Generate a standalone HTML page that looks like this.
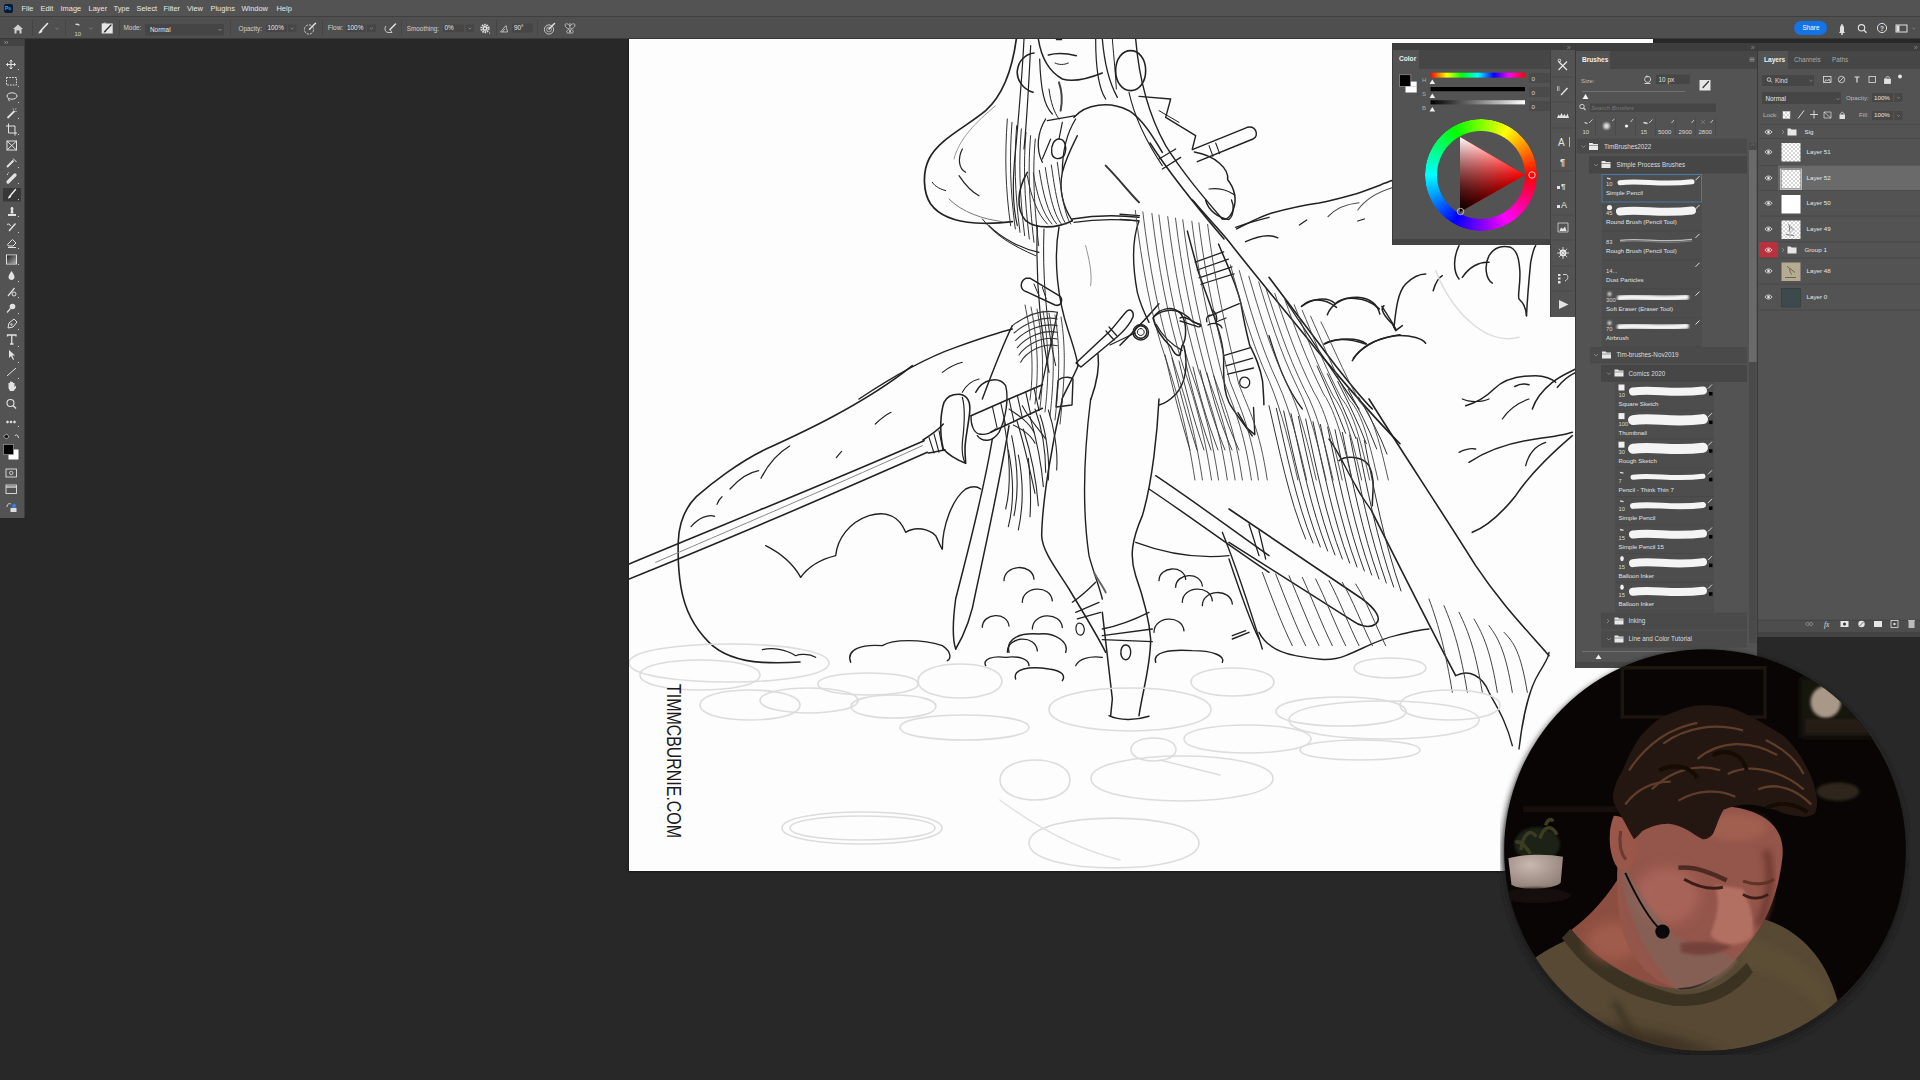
<!DOCTYPE html>
<html><head><meta charset="utf-8">
<style>
*{box-sizing:border-box;margin:0;padding:0}
html,body{width:1920px;height:1080px;overflow:hidden;background:#282828;font-family:"Liberation Sans",sans-serif;color:#d6d6d6}
.a{position:absolute}
#menubar{left:0;top:0;width:1920px;height:17px;background:#535353;border-bottom:1px solid #3f3f3f}
#menubar span{position:absolute;top:3.6px;font-size:7.45px;color:#e6e6e6;line-height:10px}
#opts{left:0;top:17px;width:1920px;height:22px;background:#4f4f4f;border-bottom:1px solid #393939}
#opts .t{position:absolute;font-size:6.4px;color:#cfcfcf;line-height:8px}
#opts .sep{position:absolute;top:3px;width:1px;height:16px;background:#454545}
#toolbar{left:0;top:39px;width:25px;height:479px;background:#535353;border-right:1px solid #3c3c3c}
#canvas{left:629px;top:39px;width:1024px;height:832px;background:#fdfdfd;overflow:hidden;box-shadow:0 1px 2px #151515}
.panel{background:#535353}
.strip{background:#3e3e3e}
.tabbar{background:#464646}
.tab{position:absolute;background:#535353;font-size:6.6px;font-weight:bold;color:#f0f0f0;line-height:18px;padding-left:6px}
.lbl{position:absolute;font-size:6px;color:#d8d8d8;line-height:8px;white-space:nowrap}
</style></head>
<body>
<!-- MENU BAR -->
<div id="menubar" class="a">
  <div class="a" style="left:4px;top:4px;width:9px;height:9px;background:#0a1a33;border-radius:2px;"><div style="position:absolute;left:1px;top:1px;font-size:5px;font-weight:bold;color:#31a8ff;line-height:7px">Ps</div></div>
  <span style="left:21.5px">File</span>
  <span style="left:40.5px">Edit</span>
  <span style="left:60.5px">Image</span>
  <span style="left:88.5px">Layer</span>
  <span style="left:113.5px">Type</span>
  <span style="left:136.5px">Select</span>
  <span style="left:163.5px">Filter</span>
  <span style="left:187px">View</span>
  <span style="left:210.5px">Plugins</span>
  <span style="left:241.5px">Window</span>
  <span style="left:276.5px">Help</span>
</div>
<!-- OPTIONS BAR -->
<div id="opts" class="a">
  <svg class="a" style="left:0;top:0" width="600" height="22" viewBox="0 17 600 22">
    <!-- home -->
    <path d="M13 29 L18 24.5 L23 29 L21.5 29 L21.5 33.5 L19.5 33.5 L19.5 30.5 L16.5 30.5 L16.5 33.5 L14.5 33.5 L14.5 29 Z" fill="#cfcfcf"/>
    <!-- brush -->
    <path d="M47.5 23.5 L41 30.5" stroke="#e8e8e8" stroke-width="1.6" stroke-linecap="round"/>
    <path d="M41.5 30 C39.5 30.5 38.5 32 38.5 33.5 C40.5 33.5 42 32.5 42.5 31 Z" fill="#e8e8e8"/>
    <path d="M55.5 28 L57 29.2 L58.5 28" stroke="#8a8a8a" stroke-width="0.8" fill="none"/>
    <path d="M75.5 24.5 C76.5 24 78 24.3 79.5 25.2" stroke="#d8d8d8" stroke-width="1.3" fill="none"/>
    <path d="M89.5 28 L91 29.2 L92.5 28" stroke="#8a8a8a" stroke-width="0.8" fill="none"/>
    <rect x="101.7" y="23.5" width="11" height="10" fill="#e6e6e6"/>
    <path d="M101.7 23.5 L105 22.4 L107 23.5 Z" fill="#e6e6e6"/>
    <path d="M111 25 L105.5 30.8" stroke="#333" stroke-width="1.3" stroke-linecap="round"/>
    <path d="M105.8 30.3 C104.5 30.6 103.8 31.5 103.6 32.5 C104.8 32.5 105.8 31.9 106.3 30.9Z" fill="#333"/>
    <!-- option boxes -->
    <rect x="145" y="24" width="79" height="11.5" fill="#454545"/>
    <path d="M218.5 29 L220 30.5 L221.5 29" stroke="#9a9a9a" stroke-width="0.8" fill="none"/>
    <rect x="266" y="24.5" width="21" height="7.5" fill="#464646"/>
    <rect x="288" y="24.5" width="8.5" height="7.5" fill="#464646"/>
    <path d="M290.8 27.8 L292.2 29 L293.6 27.8" stroke="#9a9a9a" stroke-width="0.7" fill="none"/>
    <circle cx="309" cy="29.5" r="4.6" fill="none" stroke="#cfcfcf" stroke-width="0.9" stroke-dasharray="2.5 1"/>
    <path d="M315.5 23.2 L309.5 29.3" stroke="#e0e0e0" stroke-width="1.5" stroke-linecap="round"/>
    <rect x="346" y="24.5" width="19.5" height="7.5" fill="#464646"/>
    <rect x="367" y="24.5" width="9" height="7.5" fill="#464646"/>
    <path d="M370 27.8 L371.4 29 L372.8 27.8" stroke="#9a9a9a" stroke-width="0.7" fill="none"/>
    <path d="M386 26 C384 28.5 385 32 388 32.5 L392 32.5 L390 29.5" stroke="#cfcfcf" stroke-width="0.9" fill="none"/>
    <path d="M395.5 24 L390 29.5" stroke="#e0e0e0" stroke-width="1.5" stroke-linecap="round"/>
    <rect x="443" y="24.5" width="21" height="7.5" fill="#464646"/>
    <rect x="466" y="24.5" width="8" height="7.5" fill="#464646"/>
    <path d="M468.6 27.8 L470 29 L471.4 27.8" stroke="#9a9a9a" stroke-width="0.7" fill="none"/>
    <!-- gear -->
    <circle cx="485" cy="28.5" r="3.6" fill="none" stroke="#e0e0e0" stroke-width="2.2" stroke-dasharray="1.4 0.85"/>
    <circle cx="485" cy="28.5" r="2.4" fill="#e0e0e0"/>
    <circle cx="485" cy="28.5" r="1" fill="#4f4f4f"/>
    <rect x="489" y="32.5" width="1" height="1" fill="#ddd"/>
    <path d="M500.5 32 L507.5 32 L506 25.5 Z M503 32 C503 30.5 504 29.5 505.2 29.3" stroke="#cfcfcf" stroke-width="0.8" fill="none"/>
    <rect x="512" y="23.5" width="21" height="9" fill="#464646"/>
    <circle cx="549" cy="29.5" r="4.6" fill="none" stroke="#cfcfcf" stroke-width="0.9"/>
    <circle cx="549" cy="29.5" r="2.4" fill="none" stroke="#cfcfcf" stroke-width="0.7"/>
    <path d="M554.5 23.5 L549 29" stroke="#e0e0e0" stroke-width="1.5" stroke-linecap="round"/>
    <path d="M570 26 C568 23 565 23.5 565 25 C565 27 567 28.5 569 29 C567 30 566 32 567.5 33 C569 33.5 570 31.5 570 30 C570 31.5 571 33.5 572.5 33 C574 32 573 30 571 29 C573 28.5 575 27 575 25 C575 23.5 572 23 570 26 Z M570 23 L570 34" stroke="#cfcfcf" stroke-width="0.8" fill="none"/>
  </svg>
  <div class="sep" style="left:32px"></div>
  <div class="sep" style="left:65px"></div>
  <div class="sep" style="left:119px"></div>
  <div class="sep" style="left:229.5px"></div>
  <div class="sep" style="left:322px"></div>
  <div class="sep" style="left:401px"></div>
  <div class="sep" style="left:496px"></div>
  <div class="sep" style="left:537px"></div>
  <span class="t" style="left:74.5px;top:13px;font-size:6px">10</span>
  <span class="t" style="left:123.5px;top:7px">Mode:</span>
  <span class="t" style="left:150px;top:9px;color:#e8e8e8">Normal</span>
  <span class="t" style="left:238.5px;top:8px">Opacity:</span>
  <span class="t" style="left:267.5px;top:7px;color:#e8e8e8">100%</span>
  <span class="t" style="left:327.8px;top:7px">Flow:</span>
  <span class="t" style="left:347px;top:7px;color:#e8e8e8">100%</span>
  <span class="t" style="left:406.7px;top:8px">Smoothing:</span>
  <span class="t" style="left:444.5px;top:7px;color:#e8e8e8">0%</span>
  <span class="t" style="left:514px;top:7px;color:#e8e8e8">90°</span>
  <!-- right side -->
  <div class="a" style="left:1794px;top:4px;width:33px;height:14px;border-radius:7px;background:#1473e6"></div>
  <span class="t" style="left:1802.5px;top:7px;color:#fff;font-size:6.4px">Share</span>
  <svg class="a" style="left:1830px;top:0" width="90" height="22" viewBox="1830 17 90 22">
    <path d="M1839 33 L1845 33 L1844 31.5 L1844 28 C1844 26 1843 25 1842 25 C1841 25 1840 26 1840 28 L1840 31.5 Z" fill="#e0e0e0"/>
    <circle cx="1842" cy="34" r="1" fill="#e0e0e0"/>
    <circle cx="1842" cy="24.8" r="0.8" fill="#e0e0e0"/>
    <circle cx="1861.5" cy="27.8" r="3.2" fill="none" stroke="#e0e0e0" stroke-width="1.1"/>
    <path d="M1864 30.3 L1866.5 32.8" stroke="#e0e0e0" stroke-width="1.3"/>
    <circle cx="1882" cy="28" r="4.6" fill="none" stroke="#e0e0e0" stroke-width="1"/>
    <text x="1880" y="30.5" font-size="6.5" fill="#e0e0e0" font-family="Liberation Sans" font-weight="bold">?</text>
    <rect x="1896" y="25" width="11" height="7" fill="none" stroke="#e0e0e0" stroke-width="1"/>
    <rect x="1896.5" y="25.5" width="3" height="6" fill="#e0e0e0"/>
    <path d="M1912.5 28 L1913.8 29.2 L1915.1 28" stroke="#9a9a9a" stroke-width="0.7" fill="none"/>
  </svg>
</div>
<!-- TOOLBAR -->
<div id="toolbar" class="a">
  <div class="a" style="left:0;top:0;width:24px;height:7px;background:#434343"></div>
  <svg class="a" style="left:0;top:0" width="25" height="479" viewBox="0 39 25 479">
    <g fill="none" stroke="#e2e2e2" stroke-width="1">
      <path d="M4.5 41.5 L6 42.5 L4.5 43.5 M6.5 41.5 L8 42.5 L6.5 43.5" stroke="#bbb" stroke-width="0.6"/>
      <!-- move -->
      <path d="M11 60 L11 69 M6.5 64.5 L15.5 64.5" stroke-width="1.1"/>
      <path d="M9.5 61.5 L11 60 L12.5 61.5 M9.5 67.5 L11 69 L12.5 67.5 M8 63 L6.5 64.5 L8 66 M14 63 L15.5 64.5 L14 66" stroke-width="1"/>
      <!-- marquee -->
      <rect x="6.5" y="77.5" width="10" height="7.5" stroke-dasharray="1.6 1.2"/>
      <!-- lasso -->
      <ellipse cx="12" cy="96" rx="5" ry="3.2"/>
      <path d="M8.5 98.5 C8 100 9 101 10 100.5"/>
      <!-- magic wand -->
      <path d="M7.5 118 L14.5 111" stroke-width="1.8"/>
      <path d="M13 108.5 L13.5 109.5 M16 108.5 L15.5 109.5 M16.5 111.5 L15.5 111.5"/>
      <!-- crop -->
      <path d="M8.5 123.5 L8.5 133 L17 133 M6 126 L15 126 L15 135.5"/>
      <!-- frame -->
      <rect x="7" y="141" width="9.5" height="9"/><path d="M7 141 L16.5 150 M16.5 141 L7 150"/>
      <!-- eyedropper -->
      <path d="M7 167 L13.5 160.5" stroke-width="2"/><path d="M13 158.5 L16.5 162"/>
      <!-- healing -->
      <path d="M8 182 L15 175" stroke-width="3.2" stroke-linecap="round"/>
      <path d="M7.5 175 C7 173.5 8 172.5 9.5 172.5" stroke-dasharray="1 1"/>
      <!-- stamp -->
      <path d="M8 214 L16 214 L16 216 L8 216 Z M10.5 213.5 L13.5 213.5 L13 210 C14 209 13.5 207 12 207 C10.5 207 10 209 11 210Z" fill="#e2e2e2" stroke="none"/>
      <!-- history brush -->
      <path d="M9 231 L15.5 223.5" stroke-width="1.4"/><path d="M7 224.5 C8.5 223.5 10 224 10.5 226"/>
      <!-- eraser -->
      <path d="M7.5 244.5 L12.5 239.5 L16 243 L13 246 L8.5 246 Z" />
      <path d="M8 247.5 L16 247.5"/>
      <!-- gradient -->
      <rect x="6.5" y="255" width="10" height="9"/>
      <!-- blur -->
      <path d="M11.5 271 C9 274.5 8.5 276 8.5 277 C8.5 279 10 280 11.5 280 C13 280 14.5 279 14.5 277 C14.5 276 14 274.5 11.5 271Z" fill="#e2e2e2" stroke="none"/>
      <!-- smudge -->
      <path d="M8 296 L14.5 288" stroke-width="1.2"/><circle cx="14" cy="294" r="2"/>
      <!-- dodge -->
      <circle cx="12.5" cy="290" r="0" /><circle cx="13" cy="309.5" r="0"/>
      <circle cx="12.5" cy="306.5" r="2.8" fill="#e2e2e2" stroke="none"/><path d="M10.5 308.5 L7 312.5" stroke-width="1.2"/>
      <!-- pen -->
      <path d="M8 328 L9 323 L14 319 L17 322 L13 327 Z"/><circle cx="11.5" cy="324.5" r="0.8"/>
      <!-- type -->
      <path d="M7.5 336.5 L7.5 335 L16 335 L16 336.5 M11.75 335 L11.75 344 M10 344 L13.5 344" stroke-width="1.3"/>
      <!-- path select -->
      <path d="M9 350 L9 358 L11 356 L13 360 L14 359.5 L12.3 355.5 L15 355.5 Z" fill="#e2e2e2" stroke="none"/>
      <!-- line -->
      <path d="M7 376 L16 368"/>
      <!-- hand -->
      <path d="M8.5 388 L8.5 383 L10 383 L10 381.5 L11.5 381.5 L11.5 382 L13 382 L13 383 L14.5 383 L14.5 387 L16 385.5 L16 388 L13.5 391 L10 391 Z" fill="#e2e2e2" stroke="none"/>
      <!-- zoom -->
      <circle cx="10.5" cy="403" r="3.5" stroke-width="1.1"/><path d="M13 405.5 L16 408.5" stroke-width="1.4"/>
      <!-- more -->
      <circle cx="7.5" cy="422" r="0.9" fill="#e2e2e2"/><circle cx="11" cy="422" r="0.9" fill="#e2e2e2"/><circle cx="14.5" cy="422" r="0.9" fill="#e2e2e2"/>
      <!-- swap -->
      <path d="M15 436 C15.5 434.5 17 434.5 18 436 L18.5 438" stroke-width="0.9"/>
      <!-- quick mask -->
      <rect x="6" y="469" width="10.5" height="8" stroke-width="0.9"/><circle cx="11.25" cy="473" r="1.7" stroke-width="0.8"/>
      <!-- screen mode -->
      <rect x="6" y="485" width="10.5" height="8.5" stroke-width="0.9"/><path d="M6 487 L16.5 487" stroke-width="1.3"/>
      <path d="M7 507 C7 504 9 503 11 504" stroke-width="0.9"/>
    </g>
    <!-- small corner dots -->
    <g fill="#cfcfcf">
      <rect x="18" y="69" width="1" height="1"/><rect x="18" y="86" width="1" height="1"/><rect x="18" y="102" width="1" height="1"/>
      <rect x="18" y="118" width="1" height="1"/><rect x="18" y="134" width="1" height="1"/><rect x="18" y="167" width="1" height="1"/>
      <rect x="18" y="183" width="1" height="1"/><rect x="18" y="199" width="1" height="1"/><rect x="18" y="216" width="1" height="1"/>
      <rect x="18" y="232" width="1" height="1"/><rect x="18" y="248" width="1" height="1"/><rect x="18" y="264" width="1" height="1"/>
      <rect x="18" y="281" width="1" height="1"/><rect x="18" y="297" width="1" height="1"/><rect x="18" y="313" width="1" height="1"/>
      <rect x="18" y="329" width="1" height="1"/><rect x="18" y="346" width="1" height="1"/><rect x="18" y="362" width="1" height="1"/>
      <rect x="18" y="378" width="1" height="1"/><rect x="18" y="426" width="1" height="1"/>
    </g>
    <!-- selected brush -->
    <rect x="3" y="188" width="18" height="13.5" fill="#383838"/>
    <path d="M15.5 189.5 L10 196" stroke="#f0f0f0" stroke-width="1.4" stroke-linecap="round"/>
    <path d="M10.3 195.5 C9 195.8 8 197 8 198.5 C9.5 198.5 10.8 197.6 11.2 196.3Z" fill="#f0f0f0"/>
    <rect x="18" y="199" width="1" height="1" fill="#cfcfcf"/>
    <!-- gradient fill -->
    <defs><linearGradient id="gg" x1="0" y1="0" x2="1" y2="1"><stop offset="0" stop-color="#222"/><stop offset="1" stop-color="#aaa"/></linearGradient></defs>
    <rect x="7" y="255.5" width="9" height="8" fill="url(#gg)"/>
    <!-- fg/bg -->
    <path d="M3.5 436 L7 434 L9 437 L6 439 Z" fill="#111" stroke="#ddd" stroke-width="0.6"/>
    <rect x="8.5" y="449.5" width="10" height="10" fill="#fff"/>
    <rect x="3.5" y="444.5" width="10" height="10" fill="#000" stroke="#9a9a9a" stroke-width="0.7"/>
    <circle cx="14" cy="506" r="2.2" fill="#3b7dd8"/>
    <rect x="10.5" y="508" width="6" height="4" fill="#ddd"/>
  </svg>
</div>
<!-- CANVAS -->
<div id="canvas" class="a"><svg id="art" width="1024" height="832" viewBox="0 0 1024 832" style="position:absolute;left:0;top:0"><g fill="none" stroke-linecap="round" stroke-linejoin="round"><g transform="translate(0 0) scale(0.333333)">
<path d="M1162 0 C1150 90 1120 170 1070 215 C1010 265 930 300 900 360 C880 400 882 460 905 495 C930 530 980 548 1040 552 C1080 555 1120 552 1150 548" stroke="#222" stroke-width="1.7" vector-effect="non-scaling-stroke"/>
<path d="M1100 200 C1040 250 990 300 975 360" stroke="#999" stroke-width="1.0" vector-effect="non-scaling-stroke"/>
<path d="M1000 330 C985 360 990 390 1010 400" stroke="#222" stroke-width="1.2" vector-effect="non-scaling-stroke"/>
<path d="M990 410 C1010 440 1030 460 1050 470" stroke="#222" stroke-width="1.2" vector-effect="non-scaling-stroke"/>
<path d="M910 430 C920 445 935 450 950 455" stroke="#222" stroke-width="1.0" vector-effect="non-scaling-stroke"/>
<path d="M960 480 C1000 520 1060 540 1120 548" stroke="#777" stroke-width="1.0" vector-effect="non-scaling-stroke"/>
<path d="M1080 560 C1120 600 1180 630 1230 640" stroke="#222" stroke-width="1.2" vector-effect="non-scaling-stroke"/>
<path d="M1060 540 C1100 590 1150 620 1220 650" stroke="#222" stroke-width="1.0" vector-effect="non-scaling-stroke"/>
<path d="M1135 240 C1127 350 1129 450 1145 560" stroke="#333" stroke-width="1.0" vector-effect="non-scaling-stroke"/>
<path d="M1149 250 C1141 355 1143 455 1159 570" stroke="#333" stroke-width="1.0" vector-effect="non-scaling-stroke"/>
<path d="M1163 260 C1155 360 1157 460 1173 580" stroke="#333" stroke-width="1.0" vector-effect="non-scaling-stroke"/>
<path d="M1177 270 C1169 365 1171 465 1187 590" stroke="#333" stroke-width="1.0" vector-effect="non-scaling-stroke"/>
<path d="M1191 280 C1183 370 1185 470 1201 600" stroke="#333" stroke-width="1.0" vector-effect="non-scaling-stroke"/>
<path d="M1205 290 C1197 375 1199 475 1215 610" stroke="#333" stroke-width="1.0" vector-effect="non-scaling-stroke"/>
<path d="M1219 300 C1211 380 1213 480 1229 620" stroke="#333" stroke-width="1.0" vector-effect="non-scaling-stroke"/>
<path d="M1185 0 C1180 100 1170 220 1160 330 C1150 420 1150 500 1165 560" stroke="#222" stroke-width="1.2" vector-effect="non-scaling-stroke"/>
<path d="M1205 20 C1200 120 1195 230 1185 330" stroke="#222" stroke-width="1.2" vector-effect="non-scaling-stroke"/>
<path d="M1232 60 C1235 150 1245 200 1270 225" stroke="#222" stroke-width="1.2" vector-effect="non-scaling-stroke"/>
<path d="M1260 150 C1265 190 1275 220 1290 240" stroke="#222" stroke-width="1.0" vector-effect="non-scaling-stroke"/>
<path d="M1290 130 C1300 160 1300 190 1295 215" stroke="#444" stroke-width="2.0" vector-effect="non-scaling-stroke"/>
<path d="M1228 0 C1235 45 1255 95 1300 120 C1330 130 1370 122 1420 102" stroke="#222" stroke-width="1.5" vector-effect="non-scaling-stroke"/>
<path d="M1258 48 C1280 42 1310 42 1342 50" stroke="#222" stroke-width="1.5" vector-effect="non-scaling-stroke"/>
<path d="M1278 72 C1290 78 1305 78 1318 72" stroke="#222" stroke-width="1.0" vector-effect="non-scaling-stroke"/>
<path d="M1282 2 L1298 2" stroke="#222" stroke-width="1.2" vector-effect="non-scaling-stroke"/>
<path d="M1212 160 C1180 150 1162 120 1165 95 C1168 65 1190 45 1215 42" stroke="#222" stroke-width="1.6" vector-effect="non-scaling-stroke"/>
<path d="M1505 35 C1530 35 1550 60 1550 95 C1550 130 1530 155 1505 155 C1480 155 1460 130 1460 95 C1460 60 1480 35 1505 35 Z" stroke="#222" stroke-width="1.6" vector-effect="non-scaling-stroke"/>
<path d="M1420 0 C1425 60 1440 130 1465 175" stroke="#222" stroke-width="1.3" vector-effect="non-scaling-stroke"/>
<path d="M1400 0 C1400 80 1410 150 1430 180" stroke="#222" stroke-width="1.2" vector-effect="non-scaling-stroke"/>
<path d="M1450 0 C1455 60 1460 110 1462 150" stroke="#222" stroke-width="1.0" vector-effect="non-scaling-stroke"/>
<path d="M1520 0 C1530 120 1560 230 1610 320 C1660 400 1720 470 1780 540" stroke="#222" stroke-width="1.4" vector-effect="non-scaling-stroke"/>
<path d="M1500 160 C1520 250 1560 320 1600 380" stroke="#222" stroke-width="1.1" vector-effect="non-scaling-stroke"/>
<path d="M1530 172 L1625 180 L1610 235 L1700 290 L1690 330" stroke="#222" stroke-width="1.4" vector-effect="non-scaling-stroke"/>
<path d="M1590 215 L1650 250" stroke="#222" stroke-width="1.0" vector-effect="non-scaling-stroke"/>
<path d="M1335 235 C1370 195 1440 185 1500 215 C1540 240 1570 290 1600 340" stroke="#222" stroke-width="1.6" vector-effect="non-scaling-stroke"/>
<path d="M1340 240 C1315 280 1300 340 1300 400" stroke="#222" stroke-width="1.3" vector-effect="non-scaling-stroke"/>
<path d="M1430 380 C1470 420 1500 460 1530 490" stroke="#333" stroke-width="2.0" vector-effect="non-scaling-stroke"/>
<path d="M1250 240 C1225 280 1220 330 1240 370" stroke="#222" stroke-width="1.3" vector-effect="non-scaling-stroke"/>
<path d="M1195 400 C1165 450 1160 510 1190 545 C1220 570 1280 570 1330 545" stroke="#222" stroke-width="1.6" vector-effect="non-scaling-stroke"/>
<path d="M1330 545 C1300 500 1290 450 1300 400 C1310 360 1330 320 1345 290" stroke="#222" stroke-width="1.4" vector-effect="non-scaling-stroke"/>
<path d="M1255 245 L1340 230" stroke="#222" stroke-width="1.2" vector-effect="non-scaling-stroke"/>
<path d="M1290 300 C1310 300 1315 330 1305 350 C1290 365 1270 360 1268 340 C1266 320 1275 300 1290 300 Z" stroke="#222" stroke-width="1.4" vector-effect="non-scaling-stroke"/>
<path d="M1300 250 L1290 300" stroke="#222" stroke-width="1.2" vector-effect="non-scaling-stroke"/>
<path d="M1240 360 L1265 300" stroke="#222" stroke-width="1.2" vector-effect="non-scaling-stroke"/>
<path d="M1195 410 C1205 470 1225 525 1255 555" stroke="#333" stroke-width="1.0" vector-effect="non-scaling-stroke"/>
<path d="M1213 402 C1223 465 1241 525 1269 555" stroke="#333" stroke-width="1.0" vector-effect="non-scaling-stroke"/>
<path d="M1231 394 C1241 460 1257 525 1283 555" stroke="#333" stroke-width="1.0" vector-effect="non-scaling-stroke"/>
<path d="M1249 386 C1259 455 1273 525 1297 555" stroke="#333" stroke-width="1.0" vector-effect="non-scaling-stroke"/>
<path d="M1267 378 C1277 450 1289 525 1311 555" stroke="#333" stroke-width="1.0" vector-effect="non-scaling-stroke"/>
<path d="M1285 370 C1295 445 1305 525 1325 555" stroke="#333" stroke-width="1.0" vector-effect="non-scaling-stroke"/>
<path d="M1330 540 C1400 528 1470 528 1530 535" stroke="#222" stroke-width="1.5" vector-effect="non-scaling-stroke"/>
<path d="M1335 550 C1400 540 1470 540 1528 546" stroke="#222" stroke-width="1.2" vector-effect="non-scaling-stroke"/>
<path d="M1290 564 C1272 663 1287 783 1317 873 C1332 918 1344 957 1347 981" stroke="#222" stroke-width="1.4" vector-effect="non-scaling-stroke"/>
<path d="M1530 545 C1510 600 1510 680 1525 760 C1535 800 1550 830 1560 850" stroke="#222" stroke-width="1.4" vector-effect="non-scaling-stroke"/>
<path d="M1370 620 C1380 660 1390 700 1385 740" stroke="#888" stroke-width="0.9" vector-effect="non-scaling-stroke"/>
<path d="M1225 560 C1220 700 1230 850 1260 1000" stroke="#222" stroke-width="1.2" vector-effect="non-scaling-stroke"/>
<path d="M1245 570 C1240 700 1250 850 1280 980" stroke="#222" stroke-width="1.0" vector-effect="non-scaling-stroke"/>
<path d="M1190 718 C1172 728 1172 752 1192 758 L1278 798 C1298 804 1304 780 1290 770 L1204 718 Z" stroke="#222" stroke-width="1.5" vector-effect="non-scaling-stroke"/>
<path d="M1215 735 L1230 770 M1240 745 L1252 780" stroke="#222" stroke-width="1.0" vector-effect="non-scaling-stroke"/>
<path d="M1150 860 C1190 830 1240 810 1285 820" stroke="#333" stroke-width="1.1" vector-effect="non-scaling-stroke"/>
<path d="M1155 882 C1190 852 1240 830 1285 840" stroke="#333" stroke-width="1.1" vector-effect="non-scaling-stroke"/>
<path d="M1160 904 C1190 874 1240 850 1285 860" stroke="#333" stroke-width="1.1" vector-effect="non-scaling-stroke"/>
<path d="M1165 926 C1190 896 1240 870 1285 880" stroke="#333" stroke-width="1.1" vector-effect="non-scaling-stroke"/>
<path d="M1170 948 C1190 918 1240 890 1285 900" stroke="#333" stroke-width="1.1" vector-effect="non-scaling-stroke"/>
<path d="M1175 970 C1190 940 1240 910 1285 920" stroke="#333" stroke-width="1.1" vector-effect="non-scaling-stroke"/>
<path d="M1150 860 C1120 920 1090 1000 1060 1080" stroke="#222" stroke-width="1.4" vector-effect="non-scaling-stroke"/>
<path d="M1285 820 C1270 900 1250 980 1230 1080" stroke="#222" stroke-width="1.3" vector-effect="non-scaling-stroke"/>
<path d="M690 1080 C780 1020 880 960 980 925 C1050 900 1110 880 1150 870" stroke="#222" stroke-width="1.5" vector-effect="non-scaling-stroke"/>
<path d="M940 1000 C960 985 980 975 1000 970" stroke="#222" stroke-width="1.1" vector-effect="non-scaling-stroke"/>
<path d="M1000 1060 C1010 1040 1030 1025 1050 1020" stroke="#222" stroke-width="1.1" vector-effect="non-scaling-stroke"/>
<path d="M1690 332 L1855 265 C1880 258 1892 290 1872 300 L1705 368" stroke="#222" stroke-width="1.5" vector-effect="non-scaling-stroke"/>
<path d="M1740 320 L1752 352 M1760 312 L1772 344" stroke="#222" stroke-width="1.1" vector-effect="non-scaling-stroke"/>
<path d="M1696 339 C1760 350 1800 390 1796 422 C1815 445 1825 480 1813 511 C1805 535 1790 545 1779 539" stroke="#222" stroke-width="1.5" vector-effect="non-scaling-stroke"/>
<path d="M1740 450 C1770 445 1800 455 1818 468" stroke="#222" stroke-width="1.2" vector-effect="non-scaling-stroke"/>
<path d="M1563 312 C1620 400 1700 500 1785 600" stroke="#222" stroke-width="1.5" vector-effect="non-scaling-stroke"/>
<path d="M1590 360 L1640 330 M1600 390 L1655 355" stroke="#222" stroke-width="1.3" vector-effect="non-scaling-stroke"/>
<path d="M1820 565 C1860 550 1900 540 1920 535" stroke="#222" stroke-width="1.4" vector-effect="non-scaling-stroke"/>
</g>
<g transform="translate(0 360) scale(0.333333)">
<path d="M850 -100 C700 20 500 110 405 153 C330 190 250 250 202 293 C165 330 150 380 148 425 C146 480 150 530 156 565 C165 620 190 680 240 730 C270 760 320 785 400 790 C440 792 480 791 513 789" stroke="#222" stroke-width="1.6" vector-effect="non-scaling-stroke"/>
<path d="M400 752 C430 745 470 750 500 770 C510 765 540 763 560 775" stroke="#222" stroke-width="1.2" vector-effect="non-scaling-stroke"/>
<path d="M739 75 C755 60 770 48 786 40" stroke="#222" stroke-width="1.2" vector-effect="non-scaling-stroke"/>
<path d="M622 176 C628 168 633 162 638 157" stroke="#222" stroke-width="1.2" vector-effect="non-scaling-stroke"/>
<path d="M303 270 C330 240 360 220 389 215" stroke="#222" stroke-width="1.2" vector-effect="non-scaling-stroke"/>
<path d="M396 238 C420 190 450 160 482 141" stroke="#222" stroke-width="1.2" vector-effect="non-scaling-stroke"/>
<path d="M186 383 C210 355 240 345 257 352" stroke="#222" stroke-width="1.2" vector-effect="non-scaling-stroke"/>
<path d="M264 316 C268 305 273 298 279 293" stroke="#222" stroke-width="1.2" vector-effect="non-scaling-stroke"/>
<path d="M0 495 C300 370 600 250 885 125" stroke="#222" stroke-width="1.6" vector-effect="non-scaling-stroke"/>
<path d="M0 540 C300 420 600 290 895 160" stroke="#222" stroke-width="1.6" vector-effect="non-scaling-stroke"/>
<path d="M80 490 C380 360 650 245 880 140" stroke="#888" stroke-width="1.0" vector-effect="non-scaling-stroke"/>
<path d="M943 150 C930 100 935 40 945 10 C955 -10 975 -15 993 -14 C1015 -10 1025 10 1022 40 C1018 80 1008 120 1008 150 C1008 170 1010 185 1010 193 C990 185 965 175 943 150 Z" stroke="#222" stroke-width="1.6" vector-effect="non-scaling-stroke"/>
<path d="M1000 -5 C1010 30 1005 90 1000 130 C998 160 1000 180 1010 193" stroke="#222" stroke-width="1.2" vector-effect="non-scaling-stroke"/>
<path d="M882 123 C910 105 930 90 943 75" stroke="#222" stroke-width="1.5" vector-effect="non-scaling-stroke"/>
<path d="M898 162 C920 158 935 155 948 152" stroke="#222" stroke-width="1.5" vector-effect="non-scaling-stroke"/>
<path d="M900 115 L915 162 M915 105 L930 160 M930 95 L942 155" stroke="#222" stroke-width="1.1" vector-effect="non-scaling-stroke"/>
<path d="M1026 50 L1240 -43" stroke="#222" stroke-width="1.6" vector-effect="non-scaling-stroke"/>
<path d="M1086 99 L1240 28" stroke="#222" stroke-width="1.6" vector-effect="non-scaling-stroke"/>
<path d="M1090 22 L1105 90" stroke="#222" stroke-width="1.1" vector-effect="non-scaling-stroke"/>
<path d="M1115 11 L1130 79" stroke="#222" stroke-width="1.1" vector-effect="non-scaling-stroke"/>
<path d="M1140 0 L1155 68" stroke="#222" stroke-width="1.1" vector-effect="non-scaling-stroke"/>
<path d="M1165 -11 L1180 57" stroke="#222" stroke-width="1.1" vector-effect="non-scaling-stroke"/>
<path d="M1190 -22 L1205 46" stroke="#222" stroke-width="1.1" vector-effect="non-scaling-stroke"/>
<path d="M1215 -33 L1230 35" stroke="#222" stroke-width="1.1" vector-effect="non-scaling-stroke"/>
<path d="M1040 -20 C1060 -60 1110 -70 1130 -40 C1140 0 1130 60 1110 100 C1090 130 1060 130 1045 110" stroke="#222" stroke-width="1.4" vector-effect="non-scaling-stroke"/>
<path d="M1026 50 C1025 80 1035 100 1050 105 C1070 110 1090 100 1100 90" stroke="#222" stroke-width="1.3" vector-effect="non-scaling-stroke"/>
<path d="M1090 120 C1060 300 1010 480 980 600 C972 660 970 720 980 750" stroke="#222" stroke-width="1.5" vector-effect="non-scaling-stroke"/>
<path d="M1140 80 C1110 260 1070 440 1040 580 C1030 640 1010 700 980 750" stroke="#222" stroke-width="1.5" vector-effect="non-scaling-stroke"/>
<path d="M410 440 C450 460 490 490 515 535 C540 500 580 480 620 470 C625 420 660 370 720 350 C770 335 810 350 830 400 C860 380 900 390 920 410 C930 430 935 445 940 450" stroke="#222" stroke-width="1.4" vector-effect="non-scaling-stroke"/>
<path d="M940 450 C940 380 970 300 1010 270 C1030 260 1045 262 1055 270" stroke="#222" stroke-width="1.4" vector-effect="non-scaling-stroke"/>
<path d="M1300 0 C1270 130 1240 300 1238 410 C1240 460 1290 520 1320 570 C1350 620 1400 700 1430 760" stroke="#222" stroke-width="1.5" vector-effect="non-scaling-stroke"/>
<path d="M1385 0 C1370 120 1355 300 1380 470 C1390 510 1410 560 1420 600" stroke="#222" stroke-width="1.4" vector-effect="non-scaling-stroke"/>
<path d="M1590 0 C1585 100 1570 250 1540 350 C1510 420 1500 470 1520 530 C1545 600 1560 660 1565 720 C1565 800 1540 880 1530 950" stroke="#222" stroke-width="1.5" vector-effect="non-scaling-stroke"/>
<path d="M1420 640 C1430 720 1440 820 1450 900 L1445 950" stroke="#222" stroke-width="1.5" vector-effect="non-scaling-stroke"/>
<path d="M1440 950 C1470 965 1520 965 1560 952" stroke="#222" stroke-width="1.5" vector-effect="non-scaling-stroke"/>
<path d="M1420 690 C1470 680 1520 660 1560 640" stroke="#222" stroke-width="1.3" vector-effect="non-scaling-stroke"/>
<path d="M1420 710 L1570 690" stroke="#222" stroke-width="1.3" vector-effect="non-scaling-stroke"/>
<path d="M1420 722 L1570 728" stroke="#222" stroke-width="1.3" vector-effect="non-scaling-stroke"/>
<path d="M1490 738 C1502 738 1506 752 1505 762 C1504 776 1496 784 1488 782 C1478 780 1474 766 1476 754 C1478 744 1482 738 1490 738 Z" stroke="#222" stroke-width="1.4" vector-effect="non-scaling-stroke"/>
<path d="M1330 610 C1360 590 1380 570 1400 550" stroke="#222" stroke-width="1.3" vector-effect="non-scaling-stroke"/>
<path d="M1340 640 L1410 610" stroke="#222" stroke-width="1.3" vector-effect="non-scaling-stroke"/>
<path d="M1345 660 L1415 640" stroke="#222" stroke-width="1.3" vector-effect="non-scaling-stroke"/>
<path d="M1350 672 C1362 672 1368 686 1365 698 C1362 710 1350 712 1344 702 C1338 692 1340 674 1350 672 Z" stroke="#222" stroke-width="1.2" vector-effect="non-scaling-stroke"/>
<path d="M1395 520 C1405 540 1420 560 1430 580" stroke="#666" stroke-width="2.0" vector-effect="non-scaling-stroke"/>
<path d="M1125 545 C1125 495.5 1210.5 491.0 1215 540.5" stroke="#222" stroke-width="1.3" vector-effect="non-scaling-stroke"/>
<path d="M1180 610 C1180 560.5 1265.5 556.0 1270 605.5" stroke="#222" stroke-width="1.3" vector-effect="non-scaling-stroke"/>
<path d="M1060 685 C1060 641.0 1136.0 637.0 1140 681.0" stroke="#222" stroke-width="1.3" vector-effect="non-scaling-stroke"/>
<path d="M1210 690 C1210 640.5 1295.5 636.0 1300 685.5" stroke="#222" stroke-width="1.3" vector-effect="non-scaling-stroke"/>
<path d="M1590 545 C1590 501.0 1666.0 497.0 1670 541.0" stroke="#222" stroke-width="1.3" vector-effect="non-scaling-stroke"/>
<path d="M1640 565 C1640 521.0 1716.0 517.0 1720 561.0" stroke="#222" stroke-width="1.3" vector-effect="non-scaling-stroke"/>
<path d="M1660 610 C1660 560.5 1745.5 556.0 1750 605.5" stroke="#222" stroke-width="1.3" vector-effect="non-scaling-stroke"/>
<path d="M1720 620 C1720 570.5 1805.5 566.0 1810 615.5" stroke="#222" stroke-width="1.3" vector-effect="non-scaling-stroke"/>
<path d="M1575 700 C1575 650.5 1660.5 646.0 1665 695.5" stroke="#222" stroke-width="1.3" vector-effect="non-scaling-stroke"/>
<path d="M1135 760 C1135 710.5 1220.5 706.0 1225 755.5" stroke="#222" stroke-width="1.3" vector-effect="non-scaling-stroke"/>
<path d="M665 790 C650 750 700 735 760 740 C790 720 880 720 940 740 C970 760 965 780 955 785" stroke="#222" stroke-width="1.4" vector-effect="non-scaling-stroke"/>
<path d="M1070 800 C1060 780 1090 770 1130 775 C1170 770 1200 780 1200 800" stroke="#222" stroke-width="1.4" vector-effect="non-scaling-stroke"/>
<path d="M1160 840 C1150 810 1200 800 1260 810 C1300 815 1310 830 1300 845" stroke="#222" stroke-width="1.4" vector-effect="non-scaling-stroke"/>
<path d="M1140 760 C1130 720 1170 700 1230 705 C1280 700 1320 730 1310 760" stroke="#222" stroke-width="1.4" vector-effect="non-scaling-stroke"/>
<path d="M1580 790 C1570 760 1620 750 1690 755 C1750 755 1790 770 1780 790" stroke="#222" stroke-width="1.4" vector-effect="non-scaling-stroke"/>
<path d="M1340 800 C1350 780 1380 770 1420 775" stroke="#222" stroke-width="1.3" vector-effect="non-scaling-stroke"/>
<path d="M1163 63 C1183 128 1203 213 1218 283" stroke="#2a2a2a" stroke-width="1.1" vector-effect="non-scaling-stroke"/>
<path d="M1203 53 C1223 123 1238 203 1243 263" stroke="#2a2a2a" stroke-width="1.1" vector-effect="non-scaling-stroke"/>
<path d="M1233 48 C1253 103 1263 193 1258 243" stroke="#2a2a2a" stroke-width="1.1" vector-effect="non-scaling-stroke"/>
<path d="M1258 33 C1273 78 1288 153 1283 213" stroke="#2a2a2a" stroke-width="1.1" vector-effect="non-scaling-stroke"/>
<path d="M1138 153 C1153 228 1158 303 1138 383" stroke="#2a2a2a" stroke-width="1.1" vector-effect="non-scaling-stroke"/>
<path d="M1168 168 C1183 243 1183 323 1168 393" stroke="#2a2a2a" stroke-width="1.1" vector-effect="non-scaling-stroke"/>
<path d="M1198 178 C1203 228 1208 278 1203 353" stroke="#2a2a2a" stroke-width="1.1" vector-effect="non-scaling-stroke"/>
<path d="M1153 78 C1173 88 1203 103 1218 133" stroke="#2a2a2a" stroke-width="1.1" vector-effect="non-scaling-stroke"/>
<path d="M1123 60 C1140 150 1150 250 1130 330" stroke="#2a2a2a" stroke-width="1.1" vector-effect="non-scaling-stroke"/>
<path d="M1183 90 C1205 160 1222 240 1228 320" stroke="#2a2a2a" stroke-width="1.1" vector-effect="non-scaling-stroke"/>
<path d="M1148 110 C1165 190 1172 270 1155 350" stroke="#2a2a2a" stroke-width="1.1" vector-effect="non-scaling-stroke"/>
<path d="M1218 30 C1240 90 1250 160 1250 220" stroke="#2a2a2a" stroke-width="1.1" vector-effect="non-scaling-stroke"/>
<path d="M1180 20 C1200 60 1230 90 1250 120" stroke="#2a2a2a" stroke-width="1.1" vector-effect="non-scaling-stroke"/>
<path d="M1140 30 C1170 50 1200 70 1215 100" stroke="#2a2a2a" stroke-width="1.1" vector-effect="non-scaling-stroke"/>
<path d="M1520 430 C1600 460 1700 480 1800 470" stroke="#222" stroke-width="1.3" vector-effect="non-scaling-stroke"/>
<path d="M1580 230 C1700 310 1820 400 1920 470" stroke="#222" stroke-width="1.5" vector-effect="non-scaling-stroke"/>
<path d="M1560 270 C1680 350 1800 440 1920 520" stroke="#222" stroke-width="1.5" vector-effect="non-scaling-stroke"/>
<path d="M1780 400 C1820 500 1860 620 1900 750" stroke="#222" stroke-width="1.4" vector-effect="non-scaling-stroke"/>
<path d="M1810 710 L1850 695" stroke="#222" stroke-width="1.4" vector-effect="non-scaling-stroke"/>
</g>
<g transform="translate(640 190) scale(0.166667)">
<path d="M195 465 C240 420 320 405 405 470" stroke="#222" stroke-width="1.5" vector-effect="non-scaling-stroke"/>
<path d="M350 515 C370 460 430 410 530 410 C600 415 650 450 665 510" stroke="#222" stroke-width="1.5" vector-effect="non-scaling-stroke"/>
<path d="M690 460 C660 480 700 530 740 570 L760 610 L800 580" stroke="#222" stroke-width="1.5" vector-effect="non-scaling-stroke"/>
<path d="M750 590 C760 500 770 380 820 330 C860 290 900 270 940 270" stroke="#222" stroke-width="1.5" vector-effect="non-scaling-stroke"/>
<path d="M985 370 C1000 320 1020 290 1040 280" stroke="#222" stroke-width="1.5" vector-effect="non-scaling-stroke"/>
<path d="M1140 300 C1100 250 1110 160 1140 100" stroke="#222" stroke-width="1.5" vector-effect="non-scaling-stroke"/>
<path d="M1160 290 C1200 230 1260 195 1320 200" stroke="#222" stroke-width="1.5" vector-effect="non-scaling-stroke"/>
<path d="M1340 325 C1300 300 1290 220 1320 160 C1350 110 1400 95 1450 110 C1490 130 1500 180 1505 250 C1510 330 1490 400 1500 420 C1520 440 1540 460 1545 520" stroke="#222" stroke-width="1.5" vector-effect="non-scaling-stroke"/>
<path d="M1545 520 C1550 420 1560 300 1570 200 C1580 150 1590 110 1600 100" stroke="#222" stroke-width="1.5" vector-effect="non-scaling-stroke"/>
<path d="M330 690 C380 660 460 650 580 690" stroke="#222" stroke-width="1.5" vector-effect="non-scaling-stroke"/>
<path d="M500 790 C540 720 620 660 760 640 C860 635 920 660 940 685" stroke="#222" stroke-width="1.5" vector-effect="non-scaling-stroke"/>
<path d="M1180 1060 C1250 1040 1300 1010 1350 960 C1400 910 1480 880 1600 880 C1650 880 1700 900 1720 920" stroke="#222" stroke-width="1.5" vector-effect="non-scaling-stroke"/>
<path d="M1475 945 C1500 930 1530 925 1560 935" stroke="#222" stroke-width="1.5" vector-effect="non-scaling-stroke"/>
<path d="M1730 950 C1760 910 1800 880 1840 860" stroke="#222" stroke-width="1.5" vector-effect="non-scaling-stroke"/>
<path d="M1580 1080 C1600 1020 1650 960 1700 920 C1750 880 1800 860 1840 840" stroke="#222" stroke-width="1.5" vector-effect="non-scaling-stroke"/>
<path d="M0 290 C100 420 250 620 400 820 C480 920 540 1000 620 1080" stroke="#222" stroke-width="1.6" vector-effect="non-scaling-stroke"/>
<path d="M100 430 C200 580 330 780 540 1080" stroke="#222" stroke-width="1.2" vector-effect="non-scaling-stroke"/>
<path d="M0 640 C50 800 100 950 200 1080" stroke="#222" stroke-width="1.3" vector-effect="non-scaling-stroke"/>
<path d="M1000 250 C1100 500 1300 700 1500 650" stroke="#ddd" stroke-width="1.5" vector-effect="non-scaling-stroke"/>
</g>
<g transform="translate(600 360) scale(0.333333)">
<path d="M420 0 C520 160 640 340 740 500 C820 620 900 700 960 770" stroke="#222" stroke-width="1.6" vector-effect="non-scaling-stroke"/>
<path d="M430 340 C500 480 580 640 680 830" stroke="#222" stroke-width="1.6" vector-effect="non-scaling-stroke"/>
<path d="M300 120 C330 160 350 210 380 260 C400 300 420 320 430 340" stroke="#222" stroke-width="1.4" vector-effect="non-scaling-stroke"/>
<path d="M680 830 C720 810 760 830 780 880 C800 920 830 960 850 1040" stroke="#222" stroke-width="1.4" vector-effect="non-scaling-stroke"/>
<path d="M870 1050 C880 960 900 880 920 840 C940 800 960 780 960 760" stroke="#222" stroke-width="1.4" vector-effect="non-scaling-stroke"/>
<path d="M730 400 C780 380 820 340 860 290 C900 230 960 170 1030 110" stroke="#222" stroke-width="1.6" vector-effect="non-scaling-stroke"/>
<path d="M720 190 C780 150 850 130 920 120 C960 115 1000 110 1030 100" stroke="#222" stroke-width="1.5" vector-effect="non-scaling-stroke"/>
<path d="M690 160 C710 150 730 148 740 150" stroke="#222" stroke-width="1.3" vector-effect="non-scaling-stroke"/>
<path d="M890 200 C900 160 920 140 950 130" stroke="#222" stroke-width="1.3" vector-effect="non-scaling-stroke"/>
<path d="M330 185 C350 170 400 170 420 200 C440 240 430 280 430 320" stroke="#222" stroke-width="1.5" vector-effect="non-scaling-stroke"/>
<path d="M0 330 L400 600 C440 630 460 660 440 675 C420 690 390 680 370 665 L0 430" stroke="#222" stroke-width="1.6" vector-effect="non-scaling-stroke"/>
<path d="M60 375 L90 470 M90 395 L110 480" stroke="#222" stroke-width="1.3" vector-effect="non-scaling-stroke"/>
<path d="M90 700 C110 740 150 760 200 770 C260 780 300 790 350 770 C400 750 450 720 500 710 C540 700 580 690 600 690" stroke="#222" stroke-width="1.4" vector-effect="non-scaling-stroke"/>
<path d="M0 480 C40 600 70 680 90 720" stroke="#222" stroke-width="1.4" vector-effect="non-scaling-stroke"/>
<path d="M10 720 L60 700" stroke="#222" stroke-width="1.5" vector-effect="non-scaling-stroke"/>
<path d="M700 0 C720 10 760 10 780 0 M820 60 C840 30 870 10 900 0" stroke="#222" stroke-width="1.2" vector-effect="non-scaling-stroke"/>
<path d="M120 20 C150 150 180 300 230 420" stroke="#333" stroke-width="1.0" vector-effect="non-scaling-stroke"/>
<path d="M142 28 C172 160 202 310 252 432" stroke="#333" stroke-width="1.0" vector-effect="non-scaling-stroke"/>
<path d="M164 36 C194 170 224 320 274 444" stroke="#333" stroke-width="1.0" vector-effect="non-scaling-stroke"/>
<path d="M186 44 C216 180 246 330 296 456" stroke="#333" stroke-width="1.0" vector-effect="non-scaling-stroke"/>
<path d="M208 52 C238 190 268 340 318 468" stroke="#333" stroke-width="1.0" vector-effect="non-scaling-stroke"/>
<path d="M230 60 C260 200 290 350 340 480" stroke="#333" stroke-width="1.0" vector-effect="non-scaling-stroke"/>
<path d="M252 68 C282 210 312 360 362 492" stroke="#333" stroke-width="1.0" vector-effect="non-scaling-stroke"/>
<path d="M274 76 C304 220 334 370 384 504" stroke="#333" stroke-width="1.0" vector-effect="non-scaling-stroke"/>
<path d="M296 84 C326 230 356 380 406 516" stroke="#333" stroke-width="1.0" vector-effect="non-scaling-stroke"/>
<path d="M318 92 C348 240 378 390 428 528" stroke="#333" stroke-width="1.0" vector-effect="non-scaling-stroke"/>
<path d="M340 100 C370 250 400 400 450 540" stroke="#333" stroke-width="1.0" vector-effect="non-scaling-stroke"/>
<path d="M362 108 C392 260 422 410 472 552" stroke="#333" stroke-width="1.0" vector-effect="non-scaling-stroke"/>
<path d="M384 116 C414 270 444 420 494 564" stroke="#333" stroke-width="1.0" vector-effect="non-scaling-stroke"/>
<path d="M406 124 C436 280 466 430 516 576" stroke="#333" stroke-width="1.0" vector-effect="non-scaling-stroke"/>
<path d="M100 520 C130 600 160 680 190 740" stroke="#444" stroke-width="1.0" vector-effect="non-scaling-stroke"/>
<path d="M140 525 C170 600 200 680 230 740" stroke="#444" stroke-width="1.0" vector-effect="non-scaling-stroke"/>
<path d="M180 530 C210 600 240 680 270 740" stroke="#444" stroke-width="1.0" vector-effect="non-scaling-stroke"/>
<path d="M220 535 C250 600 280 680 310 740" stroke="#444" stroke-width="1.0" vector-effect="non-scaling-stroke"/>
<path d="M260 540 C290 600 320 680 350 740" stroke="#444" stroke-width="1.0" vector-effect="non-scaling-stroke"/>
<path d="M300 545 C330 600 360 680 390 740" stroke="#444" stroke-width="1.0" vector-effect="non-scaling-stroke"/>
<path d="M340 550 C370 600 400 680 430 740" stroke="#444" stroke-width="1.0" vector-effect="non-scaling-stroke"/>
<path d="M380 555 C410 600 440 680 470 740" stroke="#444" stroke-width="1.0" vector-effect="non-scaling-stroke"/>
<path d="M600 600 C630 680 650 760 670 880" stroke="#444" stroke-width="1.0" vector-effect="non-scaling-stroke"/>
<path d="M645 620 C675 690 695 760 715 880" stroke="#444" stroke-width="1.0" vector-effect="non-scaling-stroke"/>
<path d="M690 640 C720 700 740 760 760 880" stroke="#444" stroke-width="1.0" vector-effect="non-scaling-stroke"/>
<path d="M735 660 C765 710 785 760 805 880" stroke="#444" stroke-width="1.0" vector-effect="non-scaling-stroke"/>
<path d="M780 680 C810 720 830 760 850 880" stroke="#444" stroke-width="1.0" vector-effect="non-scaling-stroke"/>
<path d="M825 700 C855 730 875 760 895 880" stroke="#444" stroke-width="1.0" vector-effect="non-scaling-stroke"/>
</g>
<g transform="translate(-629 -39) scale(1.000000)">
<path d="M629.0 663.0 C629.0 637.7 829.0 637.7 829.0 663.0 C829.0 688.3 629.0 688.3 629.0 663.0 Z" stroke="#dcdcdc" stroke-width="1.6" vector-effect="non-scaling-stroke"/>
<path d="M760.0 700.5 C760.0 683.9 858.0 683.9 858.0 700.5 C858.0 717.1 760.0 717.1 760.0 700.5 Z" stroke="#dcdcdc" stroke-width="1.6" vector-effect="non-scaling-stroke"/>
<path d="M818.0 684.0 C818.0 669.4 918.0 669.4 918.0 684.0 C918.0 698.6 818.0 698.6 818.0 684.0 Z" stroke="#dcdcdc" stroke-width="1.6" vector-effect="non-scaling-stroke"/>
<path d="M851.0 706.5 C851.0 691.2 936.0 691.2 936.0 706.5 C936.0 721.8 851.0 721.8 851.0 706.5 Z" stroke="#dcdcdc" stroke-width="1.6" vector-effect="non-scaling-stroke"/>
<path d="M900.0 727.5 C900.0 710.9 1029.0 710.9 1029.0 727.5 C1029.0 744.1 900.0 744.1 900.0 727.5 Z" stroke="#dcdcdc" stroke-width="1.6" vector-effect="non-scaling-stroke"/>
<path d="M918.0 681.0 C918.0 658.4 1002.0 658.4 1002.0 681.0 C1002.0 703.6 918.0 703.6 918.0 681.0 Z" stroke="#dcdcdc" stroke-width="1.6" vector-effect="non-scaling-stroke"/>
<path d="M782.0 828.0 C782.0 806.7 942.0 806.7 942.0 828.0 C942.0 849.3 782.0 849.3 782.0 828.0 Z" stroke="#dcdcdc" stroke-width="1.6" vector-effect="non-scaling-stroke"/>
<path d="M790.0 828.0 C790.0 812.0 935.0 812.0 935.0 828.0 C935.0 844.0 790.0 844.0 790.0 828.0 Z" stroke="#dcdcdc" stroke-width="1.6" vector-effect="non-scaling-stroke"/>
<path d="M1184.0 739.0 C1184.0 720.4 1311.0 720.4 1311.0 739.0 C1311.0 757.6 1184.0 757.6 1184.0 739.0 Z" stroke="#dcdcdc" stroke-width="1.6" vector-effect="non-scaling-stroke"/>
<path d="M1091.0 778.5 C1091.0 748.6 1273.0 748.6 1273.0 778.5 C1273.0 808.4 1091.0 808.4 1091.0 778.5 Z" stroke="#dcdcdc" stroke-width="1.6" vector-effect="non-scaling-stroke"/>
<path d="M1276.0 711.5 C1276.0 692.2 1406.0 692.2 1406.0 711.5 C1406.0 730.8 1276.0 730.8 1276.0 711.5 Z" stroke="#dcdcdc" stroke-width="1.6" vector-effect="non-scaling-stroke"/>
<path d="M1289.0 720.0 C1289.0 694.7 1479.0 694.7 1479.0 720.0 C1479.0 745.3 1289.0 745.3 1289.0 720.0 Z" stroke="#dcdcdc" stroke-width="1.6" vector-effect="non-scaling-stroke"/>
<path d="M1354.0 668.0 C1354.0 654.7 1426.0 654.7 1426.0 668.0 C1426.0 681.3 1354.0 681.3 1354.0 668.0 Z" stroke="#dcdcdc" stroke-width="1.6" vector-effect="non-scaling-stroke"/>
<path d="M1049.0 709.5 C1049.0 680.9 1211.0 680.9 1211.0 709.5 C1211.0 738.1 1049.0 738.1 1049.0 709.5 Z" stroke="#dcdcdc" stroke-width="1.6" vector-effect="non-scaling-stroke"/>
<path d="M1029.0 843.0 C1029.0 809.8 1199.0 809.8 1199.0 843.0 C1199.0 876.2 1029.0 876.2 1029.0 843.0 Z" stroke="#dcdcdc" stroke-width="1.6" vector-effect="non-scaling-stroke"/>
<path d="M1131.0 749.5 C1131.0 734.2 1176.0 734.2 1176.0 749.5 C1176.0 764.8 1131.0 764.8 1131.0 749.5 Z" stroke="#dcdcdc" stroke-width="1.6" vector-effect="non-scaling-stroke"/>
<path d="M1191.0 682.0 C1191.0 663.4 1274.0 663.4 1274.0 682.0 C1274.0 700.6 1191.0 700.6 1191.0 682.0 Z" stroke="#dcdcdc" stroke-width="1.6" vector-effect="non-scaling-stroke"/>
<path d="M1000.0 780.0 C1000.0 753.4 1070.0 753.4 1070.0 780.0 C1070.0 806.6 1000.0 806.6 1000.0 780.0 Z" stroke="#dcdcdc" stroke-width="1.6" vector-effect="non-scaling-stroke"/>
<path d="M700.0 705.0 C700.0 685.0 800.0 685.0 800.0 705.0 C800.0 725.0 700.0 725.0 700.0 705.0 Z" stroke="#dcdcdc" stroke-width="1.6" vector-effect="non-scaling-stroke"/>
<path d="M640.0 675.0 C640.0 655.0 760.0 655.0 760.0 675.0 C760.0 695.0 640.0 695.0 640.0 675.0 Z" stroke="#dcdcdc" stroke-width="1.6" vector-effect="non-scaling-stroke"/>
<path d="M1400.0 705.0 C1400.0 685.0 1500.0 685.0 1500.0 705.0 C1500.0 725.0 1400.0 725.0 1400.0 705.0 Z" stroke="#dcdcdc" stroke-width="1.6" vector-effect="non-scaling-stroke"/>
<path d="M1300.0 750.0 C1300.0 736.7 1420.0 736.7 1420.0 750.0 C1420.0 763.3 1300.0 763.3 1300.0 750.0 Z" stroke="#dcdcdc" stroke-width="1.6" vector-effect="non-scaling-stroke"/>
<path d="M1000 800 C1040 830 1080 850 1120 860" stroke="#e0e0e0" stroke-width="1.4" vector-effect="non-scaling-stroke"/>
<path d="M1160 760 L1220 775" stroke="#dcdcdc" stroke-width="1.4" vector-effect="non-scaling-stroke"/>
</g>
<g transform="translate(-629 -39) scale(1.000000)">
<path d="M1236.7 228.9 C1250 222 1262 216 1272 213 C1290 208 1305 205 1319 203 C1335 200 1345 197 1355.6 194 C1370 189 1380 185 1392 180.6" stroke="#222" stroke-width="1.6" vector-effect="non-scaling-stroke"/>
<path d="M1357.8 210 C1365 200 1375 193 1392 187.8" stroke="#555" stroke-width="1.1" vector-effect="non-scaling-stroke"/>
<path d="M1328 216.7 C1335 209 1347 204 1359 202.8" stroke="#444" stroke-width="1.1" vector-effect="non-scaling-stroke"/>
<path d="M1299.4 225 L1306.7 220" stroke="#222" stroke-width="1.3" vector-effect="non-scaling-stroke"/>
<path d="M1357.8 221 L1364.4 219" stroke="#222" stroke-width="1.3" vector-effect="non-scaling-stroke"/>
<path d="M1245.6 241.7 C1258 236 1270 234 1277.8 237.8" stroke="#222" stroke-width="1.4" vector-effect="non-scaling-stroke"/>
</g>
<g transform="translate(491 161) scale(0.259269)">
<path d="M280 0 C330 60 380 110 420 160 C520 290 640 430 760 580 C860 700 960 820 1080 940" stroke="#222" stroke-width="1.6" vector-effect="non-scaling-stroke"/>
<path d="M260 120 C275 180 290 230 300 270 C320 330 340 380 360 440 C380 500 400 560 400 620 C398 680 400 740 420 780 C440 820 470 850 510 910" stroke="#222" stroke-width="1.5" vector-effect="non-scaling-stroke"/>
<path d="M380 170 C400 220 420 260 430 290 C450 340 465 380 470 420 C480 480 490 520 500 560 C520 600 540 640 550 700 C553 740 555 770 555 790" stroke="#222" stroke-width="1.5" vector-effect="non-scaling-stroke"/>
<path d="M290 240 L400 200" stroke="#222" stroke-width="1.3" vector-effect="non-scaling-stroke"/>
<path d="M298 270 L418 228" stroke="#222" stroke-width="1.3" vector-effect="non-scaling-stroke"/>
<path d="M305 300 L432 258" stroke="#222" stroke-width="1.3" vector-effect="non-scaling-stroke"/>
<path d="M312 325 L440 285" stroke="#222" stroke-width="1.2" vector-effect="non-scaling-stroke"/>
<path d="M340 450 L460 400" stroke="#222" stroke-width="1.4" vector-effect="non-scaling-stroke"/>
<path d="M335 470 C330 455 340 440 352 445" stroke="#222" stroke-width="1.3" vector-effect="non-scaling-stroke"/>
<path d="M400 600 L500 570" stroke="#222" stroke-width="1.3" vector-effect="non-scaling-stroke"/>
<path d="M408 640 L512 610" stroke="#222" stroke-width="1.3" vector-effect="non-scaling-stroke"/>
<path d="M415 672 L515 648" stroke="#222" stroke-width="1.3" vector-effect="non-scaling-stroke"/>
<path d="M455 820 L490 880 L520 905 L515 800" stroke="#222" stroke-width="1.4" vector-effect="non-scaling-stroke"/>
<path d="M480 683 C495 683 502 695 500 707 C498 720 488 726 478 724 C466 721 460 710 462 700 C464 690 470 683 480 683 Z" stroke="#222" stroke-width="1.3" vector-effect="non-scaling-stroke"/>
<path d="M330 0 C340 40 380 70 420 75 C440 60 440 20 430 0" stroke="#222" stroke-width="1.4" vector-effect="non-scaling-stroke"/>
<path d="M0 55 L75 60 M0 75 L70 80" stroke="#222" stroke-width="1.3" vector-effect="non-scaling-stroke"/>
<path d="M0 560 C50 510 100 460 150 400" stroke="#222" stroke-width="1.5" vector-effect="non-scaling-stroke"/>
<path d="M80 480 C97 480 110 495 110 510 C110 527 97 540 80 540 C63 540 50 527 50 510 C50 495 63 480 80 480 Z" stroke="#222" stroke-width="1.4" vector-effect="non-scaling-stroke"/>
<path d="M130 450 C180 410 240 420 280 470 L310 480" stroke="#222" stroke-width="1.5" vector-effect="non-scaling-stroke"/>
<path d="M140 480 C160 520 200 560 240 580" stroke="#222" stroke-width="1.3" vector-effect="non-scaling-stroke"/>
<path d="M700 410 C740 380 800 370 830 400 C860 370 950 370 1000 420" stroke="#222" stroke-width="1.5" vector-effect="non-scaling-stroke"/>
<path d="M1010 410 C1030 440 1050 470 1065 500" stroke="#222" stroke-width="1.4" vector-effect="non-scaling-stroke"/>
<path d="M790 555 C840 530 920 530 950 555" stroke="#222" stroke-width="1.5" vector-effect="non-scaling-stroke"/>
<path d="M900 610 C940 560 1000 530 1080 520" stroke="#222" stroke-width="1.5" vector-effect="non-scaling-stroke"/>
<path d="M59 40 C84 250 119 450 179 620 C219 740 259 880 289 1080" stroke="#444" stroke-width="0.9" vector-effect="non-scaling-stroke"/>
<path d="M88 46 C113 255 148 450 208 630 C248 748 288 880 318 1080" stroke="#444" stroke-width="0.9" vector-effect="non-scaling-stroke"/>
<path d="M123 52 C148 260 183 450 243 640 C283 756 323 880 353 1080" stroke="#444" stroke-width="0.9" vector-effect="non-scaling-stroke"/>
<path d="M150 58 C175 265 210 450 270 650 C310 764 350 880 380 1080" stroke="#444" stroke-width="0.9" vector-effect="non-scaling-stroke"/>
<path d="M184 64 C209 270 244 450 304 660 C344 772 384 880 414 1080" stroke="#444" stroke-width="0.9" vector-effect="non-scaling-stroke"/>
<path d="M214 70 C239 275 274 450 334 670 C374 780 414 880 444 1080" stroke="#444" stroke-width="0.9" vector-effect="non-scaling-stroke"/>
<path d="M242 76 C267 280 302 450 362 680 C402 788 442 880 472 1080" stroke="#444" stroke-width="0.9" vector-effect="non-scaling-stroke"/>
<path d="M277 82 C302 285 337 450 397 690 C437 796 477 880 507 1080" stroke="#444" stroke-width="0.9" vector-effect="non-scaling-stroke"/>
<path d="M304 88 C329 290 364 450 424 700 C464 804 504 880 534 1080" stroke="#444" stroke-width="0.9" vector-effect="non-scaling-stroke"/>
<path d="M338 94 C363 295 398 450 458 710 C498 812 538 880 568 1080" stroke="#444" stroke-width="0.9" vector-effect="non-scaling-stroke"/>
<path d="M426 250 C466 400 506 550 576 700 C626 820 656 950 686 1080" stroke="#444" stroke-width="0.9" vector-effect="non-scaling-stroke"/>
<path d="M460 272 C500 415 540 560 610 708 C660 820 690 950 720 1080" stroke="#444" stroke-width="0.9" vector-effect="non-scaling-stroke"/>
<path d="M497 294 C537 430 577 570 647 716 C697 820 727 950 757 1080" stroke="#444" stroke-width="0.9" vector-effect="non-scaling-stroke"/>
<path d="M535 316 C575 445 615 580 685 724 C735 820 765 950 795 1080" stroke="#444" stroke-width="0.9" vector-effect="non-scaling-stroke"/>
<path d="M562 338 C602 460 642 590 712 732 C762 820 792 950 822 1080" stroke="#444" stroke-width="0.9" vector-effect="non-scaling-stroke"/>
<path d="M597 360 C637 475 677 600 747 740 C797 820 827 950 857 1080" stroke="#444" stroke-width="0.9" vector-effect="non-scaling-stroke"/>
<path d="M635 382 C675 490 715 610 785 748 C835 820 865 950 895 1080" stroke="#444" stroke-width="0.9" vector-effect="non-scaling-stroke"/>
<path d="M672 404 C712 505 752 620 822 756 C872 820 902 950 932 1080" stroke="#444" stroke-width="0.9" vector-effect="non-scaling-stroke"/>
<path d="M703 426 C743 520 783 630 853 764 C903 820 933 950 963 1080" stroke="#444" stroke-width="0.9" vector-effect="non-scaling-stroke"/>
<path d="M735 448 C775 535 815 640 885 772 C935 820 965 950 995 1080" stroke="#444" stroke-width="0.9" vector-effect="non-scaling-stroke"/>
<path d="M775 470 C815 550 855 650 925 780 C975 820 1005 950 1035 1080" stroke="#444" stroke-width="0.9" vector-effect="non-scaling-stroke"/>
<path d="M760 640 C800 730 840 820 870 900" stroke="#333" stroke-width="1.0" vector-effect="non-scaling-stroke"/>
<path d="M800 670 C840 755 880 840 910 920" stroke="#333" stroke-width="1.0" vector-effect="non-scaling-stroke"/>
<path d="M840 700 C880 780 920 860 950 940" stroke="#333" stroke-width="1.0" vector-effect="non-scaling-stroke"/>
<path d="M880 730 C920 805 960 880 990 960" stroke="#333" stroke-width="1.0" vector-effect="non-scaling-stroke"/>
<path d="M920 760 C960 830 1000 900 1030 980" stroke="#333" stroke-width="1.0" vector-effect="non-scaling-stroke"/>
</g>
<g transform="translate(-629 -39) scale(1.000000)">
<path d="M1076 363 L1109 332 C1115 326 1122 316 1127 311 C1131 308 1134 312 1133 317 C1130 324 1124 331 1117 337 L1081 367 Z" stroke="#222" stroke-width="1.5" vector-effect="non-scaling-stroke"/>
<path d="M1106 331 L1114 340 M1109 327 L1117 336" stroke="#222" stroke-width="1.2" vector-effect="non-scaling-stroke"/>
<path d="M1140.8 325.8 A6.2 6.2 0 1 1 1140.7 325.8 Z" stroke="#222" stroke-width="1.5" vector-effect="non-scaling-stroke"/>
<path d="M1140.8 328.5 A3.5 3.5 0 1 1 1140.7 328.5 Z" stroke="#222" stroke-width="1.0" vector-effect="non-scaling-stroke"/>
<path d="M1110 345 L1135 333" stroke="#222" stroke-width="1.2" vector-effect="non-scaling-stroke"/>
<path d="M1153 318 C1159 308 1173 305 1181 314 C1187 322 1187 339 1182 346 L1180 355 C1176 357 1173 351 1171 347 C1166 342 1156 332 1153 318 Z" stroke="#222" stroke-width="1.5" vector-effect="non-scaling-stroke"/>
<path d="M1180 318 C1184 315 1191 321 1200 325 C1202 326 1199 328 1196 326 C1189 324 1184 322 1180 321" stroke="#222" stroke-width="1.4" vector-effect="non-scaling-stroke"/>
<path d="M1058 381 C1060 377 1070 376 1073 379 L1072 405 L1056 407 Z" stroke="#222" stroke-width="1.4" vector-effect="non-scaling-stroke"/>
<path d="M1078 366 C1072 380 1066 390 1062 399" stroke="#222" stroke-width="1.5" vector-effect="non-scaling-stroke"/>
<path d="M1098 354 C1100 370 1096 385 1091 399" stroke="#222" stroke-width="1.5" vector-effect="non-scaling-stroke"/>
<path d="M1184 346 C1188 365 1186 382 1176 394 C1170 400 1164 404 1159 405" stroke="#222" stroke-width="1.5" vector-effect="non-scaling-stroke"/>
<path d="M1212 310 C1216 312 1218 318 1216 322 L1226 318" stroke="#222" stroke-width="1.3" vector-effect="non-scaling-stroke"/>
<path d="M1208 325 C1212 322 1220 323 1222 328" stroke="#222" stroke-width="1.3" vector-effect="non-scaling-stroke"/>
<path d="M1025 305 C1030 330 1035 360 1030 400" stroke="#333" stroke-width="0.9" vector-effect="non-scaling-stroke"/>
<path d="M1031 307 C1036 333 1040 363 1035 404" stroke="#333" stroke-width="0.9" vector-effect="non-scaling-stroke"/>
<path d="M1037 309 C1042 336 1045 366 1040 408" stroke="#333" stroke-width="0.9" vector-effect="non-scaling-stroke"/>
<path d="M1043 311 C1048 339 1050 369 1045 412" stroke="#333" stroke-width="0.9" vector-effect="non-scaling-stroke"/>
<path d="M1049 313 C1054 342 1055 372 1050 416" stroke="#333" stroke-width="0.9" vector-effect="non-scaling-stroke"/>
<path d="M1055 315 C1060 345 1060 375 1055 420" stroke="#333" stroke-width="0.9" vector-effect="non-scaling-stroke"/>
<path d="M1061 317 C1066 348 1065 378 1060 424" stroke="#333" stroke-width="0.9" vector-effect="non-scaling-stroke"/>
<path d="M1165 355 C1172 385 1178 410 1190 450" stroke="#333" stroke-width="0.9" vector-effect="non-scaling-stroke"/>
<path d="M1172 358 C1179 388 1185 412 1197 450" stroke="#333" stroke-width="0.9" vector-effect="non-scaling-stroke"/>
<path d="M1179 361 C1186 391 1192 414 1204 450" stroke="#333" stroke-width="0.9" vector-effect="non-scaling-stroke"/>
<path d="M1186 364 C1193 394 1199 416 1211 450" stroke="#333" stroke-width="0.9" vector-effect="non-scaling-stroke"/>
<path d="M1193 367 C1200 397 1206 418 1218 450" stroke="#333" stroke-width="0.9" vector-effect="non-scaling-stroke"/>
<path d="M1200 370 C1207 400 1213 420 1225 450" stroke="#333" stroke-width="0.9" vector-effect="non-scaling-stroke"/>
<path d="M1207 373 C1214 403 1220 422 1232 450" stroke="#333" stroke-width="0.9" vector-effect="non-scaling-stroke"/>
<path d="M1214 376 C1221 406 1227 424 1239 450" stroke="#333" stroke-width="0.9" vector-effect="non-scaling-stroke"/>
</g></g><text transform="translate(37.5 645) rotate(90)" font-family="Liberation Sans" font-size="20" textLength="154" lengthAdjust="spacingAndGlyphs" fill="#1a1a1a">TIMMCBURNIE.COM</text></svg></div>
<!-- PANELS -->
<div id="colorpanel" class="a panel" style="left:1392px;top:43px;width:158px;height:202px;border-left:1px solid #3a3a3a">
  <div class="a strip" style="left:0;top:0;width:158px;height:7px"></div>
  <div class="a tabbar" style="left:0;top:7px;width:158px;height:19px"></div>
  <div class="tab" style="left:0;top:7px;width:26px;height:19px">Color</div>
  <div class="a" style="left:0;top:196px;width:158px;height:6px;background:#444"></div>
  <div class="a" style="left:32px;top:76px;width:112px;height:112px;border-radius:50%;background:conic-gradient(from 90deg,#f00,#f0f,#00f,#0ff,#0f0,#ff0,#f00);-webkit-mask:radial-gradient(circle,transparent 43.5px,#000 44.5px,#000 55.5px,transparent 56.2px);mask:radial-gradient(circle,transparent 43.5px,#000 44.5px,#000 55.5px,transparent 56.2px)"></div>
  <svg class="a" style="left:-1px;top:0" width="159" height="202" viewBox="1391 43 159 202">
    <defs>
      <linearGradient id="hue" x1="0" x2="1">
        <stop offset="0" stop-color="#ff0000"/><stop offset="0.17" stop-color="#ffff00"/><stop offset="0.33" stop-color="#00ff00"/>
        <stop offset="0.5" stop-color="#00ffff"/><stop offset="0.67" stop-color="#0000ff"/><stop offset="0.83" stop-color="#ff00ff"/><stop offset="1" stop-color="#ff0000"/>
      </linearGradient>
      <linearGradient id="bri" x1="0" x2="1"><stop offset="0" stop-color="#000"/><stop offset="1" stop-color="#fff"/></linearGradient>
      <linearGradient id="triW" gradientUnits="userSpaceOnUse" x1="1459" y1="137" x2="1491.5" y2="193.5"><stop offset="0" stop-color="#fff" stop-opacity="1"/><stop offset="1" stop-color="#fff" stop-opacity="0"/></linearGradient>
      <linearGradient id="triB" gradientUnits="userSpaceOnUse" x1="1459" y1="212" x2="1491.5" y2="156"><stop offset="0" stop-color="#000" stop-opacity="1"/><stop offset="1" stop-color="#000" stop-opacity="0"/></linearGradient>
    </defs>
    <rect x="1398.5" y="74.7" width="11.3" height="11.8" fill="#000" stroke="#8a8a8a" stroke-width="0.8"/>
    <rect x="1404.5" y="86.5" width="11.2" height="6" fill="#fff"/>
    <rect x="1409.8" y="81.6" width="5.9" height="5" fill="#fff"/>
    <rect x="1429.6" y="72.7" width="94.4" height="4.9" fill="url(#hue)"/>
    <rect x="1429.6" y="87" width="94.4" height="4.2" fill="#000"/>
    <rect x="1429.6" y="100.2" width="94.4" height="4.2" fill="url(#bri)"/>
    <rect x="1528" y="73" width="22" height="10" fill="#4a4a4a"/>
    <rect x="1528" y="87" width="22" height="10" fill="#4a4a4a"/>
    <rect x="1528" y="101" width="22" height="10" fill="#4a4a4a"/>
    <g fill="#f0f0f0">
      <path d="M1428.5 84 L1431.3 79.5 L1434.1 84 Z"/>
      <path d="M1428.5 98 L1431.3 93.5 L1434.1 98 Z"/>
      <path d="M1428.5 111.5 L1431.3 107 L1434.1 111.5 Z"/>
    </g>
    <g font-family="Liberation Sans" font-size="6" fill="#aaa">
      <text x="1421" y="82">H</text><text x="1421" y="96">S</text><text x="1421" y="110">B</text>
    </g>
    <g font-family="Liberation Sans" font-size="6.2" fill="#d8d8d8">
      <text x="1530.5" y="80.5">0</text><text x="1530.5" y="94.5">0</text><text x="1530.5" y="108.5">0</text>
    </g>
    
    <path d="M1459 137 L1524 175 L1459 212 Z" fill="#f00"/><path d="M1459 137 L1524 175 L1459 212 Z" fill="url(#triW)"/>
    <path d="M1459 137 L1524 175 L1459 212 Z" fill="url(#triB)"/>
    <circle cx="1531" cy="175" r="3.2" fill="none" stroke="#fff" stroke-width="0.8"/>
    <circle cx="1459.5" cy="211.5" r="3.2" fill="none" stroke="#ddd" stroke-width="0.8"/>
  </svg>
</div>
<div id="iconstrip" class="a panel" style="left:1550px;top:43px;width:25px;height:274px;border-left:1px solid #3f3f3f">
  <div class="a strip" style="left:0;top:0;width:25px;height:7px"></div>
  <svg class="a" style="left:-1px;top:0" width="26" height="274" viewBox="1549 43 26 274">
    <path d="M1566.5 46 L1567.5 47.5 L1566.5 49 M1568 46 L1569 47.5 L1568 49" stroke="#aaa" stroke-width="0.5" fill="none"/>
    <g stroke="#444" stroke-width="0.6">
      <path d="M1551.5 77 L1573 77 M1551.5 102 L1573 102 M1551.5 128 L1573 128 M1551.5 171 L1573 171 M1551.5 215 L1573 215 M1551.5 240 L1573 240 M1551.5 266 L1573 266 M1551.5 291 L1573 291"/>
    </g>
    <g fill="none" stroke="#e4e4e4" stroke-width="1">
      <path d="M1557.5 70 L1566 61.5 M1557.5 61.5 L1566 70" stroke-width="1.3"/>
      <circle cx="1558.5" cy="60.5" r="1.3"/><circle cx="1566.5" cy="60.5" r="0"/>
      <path d="M1560 95 L1566.5 88" stroke-width="1.4"/>
      <path d="M1556.5 86 L1556.5 91 M1558 86 L1558 91" stroke-width="0.6"/>
      <path d="M1556 118 L1557.5 114.5 L1559 116 L1560.5 113 L1562 116 L1563.5 114 L1565 116.5 L1566.5 113.5 L1568 118 Z" fill="#e4e4e4" stroke="none"/>
      <path d="M1568.5 137 L1568.5 147" stroke-width="0.7"/>
    </g>
    <g font-family="Liberation Sans" fill="#e4e4e4">
      <text x="1557" y="146" font-size="10">A</text>
      <text x="1559" y="165" font-size="9" font-weight="bold">¶</text>
      <text x="1560" y="189" font-size="8" font-weight="bold">¶</text>
      <text x="1560" y="208" font-size="9">A</text>
    </g>
    <g fill="#e4e4e4">
      <rect x="1556" y="186" width="3" height="3"/><rect x="1556" y="205" width="3" height="3"/>
      <path d="M1557 223 L1567 223 L1567 232 L1557 232 Z" fill="none" stroke="#e4e4e4" stroke-width="0.7"/>
      <path d="M1558.5 231 L1560 227.5 L1562 229 L1564 226.5 L1565.5 231 Z"/>
      <circle cx="1562" cy="253" r="2.6" fill="none" stroke="#e4e4e4" stroke-width="1.6"/>
      <path d="M1562 247 L1562 259 M1556 253 L1568 253 M1557.8 248.8 L1566.2 257.2 M1566.2 248.8 L1557.8 257.2" stroke="#e4e4e4" stroke-width="0.8"/>
      <rect x="1557" y="274" width="2.5" height="2" /><rect x="1557" y="277.5" width="2.5" height="2"/><rect x="1557" y="281" width="2.5" height="2.5"/>
      <path d="M1562 274.5 L1565.5 274.5 C1567.5 275.5 1567.5 279.5 1564 281" fill="none" stroke="#e4e4e4" stroke-width="0.9"/>
      <path d="M1558 300 L1567.5 304.5 L1558 309 Z"/>
    </g>
  </svg>
</div>
<div id="brushes" class="a panel" style="left:1575px;top:43px;width:182px;height:625px;border-left:1px solid #3a3a3a">
  <div class="a strip" style="left:0;top:0;width:182px;height:8px"></div>
  <div class="a tabbar" style="left:0;top:8px;width:182px;height:18px"></div>
  <div class="tab" style="left:0;top:8px;width:34px;height:18px;line-height:17px">Brushes</div>
  <svg class="a" style="left:-1px;top:0" width="183" height="625" viewBox="1574 43 183 625">
    <path d="M1750.5 46 L1751.5 47.5 L1750.5 49 M1752 46 L1753 47.5 L1752 49" stroke="#aaa" stroke-width="0.5" fill="none"/>
    <path d="M1748.5 58 L1753.5 58 M1748.5 59.5 L1753.5 59.5 M1748.5 61 L1753.5 61" stroke="#999" stroke-width="0.8"/>
    <path d="M1646 76.5 C1643.5 77 1643 80 1644.5 81.5 C1646 83 1649 82.5 1649.5 80 C1650 78 1648.5 76.5 1647 76.5 L1645.5 76.5 M1646 75.5 L1645 76.5 L1646 77.5 M1643.5 83.5 L1649.5 83.5" stroke="#e0e0e0" stroke-width="0.9" fill="none"/>
    <rect x="1655" y="74.5" width="34" height="9.5" fill="#464646"/>
    <rect x="1698.5" y="80" width="11" height="10.5" fill="#e6e6e6"/>
    <path d="M1707.5 81.5 L1702 87.5" stroke="#333" stroke-width="1.2" stroke-linecap="round"/>
    <path d="M1581 91.5 L1684 91.5" stroke="#7a7a7a" stroke-width="0.8"/>
    <path d="M1581.5 99 L1584.5 94 L1587.5 99 Z" fill="#f4f4f4"/>
    <circle cx="1581" cy="106.5" r="2.2" fill="none" stroke="#ddd" stroke-width="0.9"/>
    <path d="M1582.6 108.1 L1584.5 110" stroke="#ddd" stroke-width="1.1"/>
    <rect x="1589" y="103.5" width="126" height="8.5" fill="#464646"/>
    <g stroke="#474747" stroke-width="0.6"><path d="M1594.5 117 L1594.5 136 M1614.5 117 L1614.5 136 M1634.5 117 L1634.5 136 M1654.5 117 L1654.5 136 M1674.5 117 L1674.5 136 M1694.5 117 L1694.5 136 M1714.5 117 L1714.5 136"/></g>
    <path d="M1583.5 122.5 L1586.5 123.5" stroke="#ddd" stroke-width="1.2"/><path d="M1588 123 L1591.5 119.5" stroke="#ddd" stroke-width="0.8"/>
    <circle cx="1605.5" cy="126" r="3.2" fill="#ddd" filter="url(#blur1)"/><path d="M1611 121 L1613.5 119" stroke="#ddd" stroke-width="0.8"/>
    <circle cx="1625.5" cy="126" r="1.6" fill="#f4f4f4"/><path d="M1629.5 122 L1632 119" stroke="#ddd" stroke-width="0.8"/>
    <path d="M1642.5 122.5 L1646.5 123.5" stroke="#ddd" stroke-width="1.4"/><path d="M1648 123 L1651.5 119.5" stroke="#ddd" stroke-width="0.8"/>
    <path d="M1670.5 123 L1673 120" stroke="#ddd" stroke-width="0.8"/>
    <path d="M1690.5 123 L1693 120" stroke="#ddd" stroke-width="0.8"/>
    <path d="M1700 124 L1704 120 M1700 120 L1704 124" stroke="#888" stroke-width="0.6"/><path d="M1709.5 123 L1712 120" stroke="#ddd" stroke-width="0.8"/>
    <defs><filter id="blur1" x="-20%" y="-100%" width="140%" height="300%"><feGaussianBlur stdDeviation="1.2"/></filter></defs><rect x="1576" y="138.5" width="170" height="15" fill="#4a4a4a"/><rect x="1588" y="156" width="158" height="17.5" fill="#464646"/><path d="M1580.5 145.5 L1582.5 147.5 L1584.5 145.5" stroke="#9a9a9a" stroke-width="0.7" fill="none"/><path d="M1588 143 L1591.5 143 L1592.5 144 L1597 144 L1597 150 L1588 150 Z" fill="#e8e8e8"/><path d="M1588 145.5 L1597 145.5" stroke="#464646" stroke-width="0.5"/><path d="M1593 164 L1595 166 L1597 164" stroke="#9a9a9a" stroke-width="0.7" fill="none"/><path d="M1600.5 161 L1604.0 161 L1605.0 162 L1609.5 162 L1609.5 168 L1600.5 168 Z" fill="#e8e8e8"/><path d="M1600.5 163.5 L1609.5 163.5" stroke="#464646" stroke-width="0.5"/><rect x="1600.7" y="174.2" width="100" height="28" fill="#4d4d4d"/><path d="M1601 202.5 L1700.7 202.5" stroke="#444" stroke-width="0.8"/><path d="M1619 182.7 C1640.6 179.7 1658.6 185.7 1691 181.7" stroke="#f4f4f4" stroke-width="5" fill="none" stroke-linecap="round"/><path d="M1606 178.2 L1609.5 179.0" stroke="#ddd" stroke-width="1.3"/><path d="M1694.5 180.2 L1698.5 176.2" stroke="#e0e0e0" stroke-width="1"/><rect x="1600.7" y="203.0" width="100" height="28" fill="#4d4d4d"/><path d="M1601 231.3 L1700.7 231.3" stroke="#444" stroke-width="0.8"/><path d="M1619 211.54999999999998 C1640.6 208.54999999999998 1658.6 214.54999999999998 1691 210.54999999999998" stroke="#f4f4f4" stroke-width="8" fill="none" stroke-linecap="round"/><circle cx="1608.5" cy="207.5" r="2.6" fill="#f0f0f0"/><path d="M1694.5 209.0 L1698.5 205.0" stroke="#e0e0e0" stroke-width="1"/><rect x="1600.7" y="231.9" width="100" height="28" fill="#4d4d4d"/><path d="M1601 260.2 L1700.7 260.2" stroke="#444" stroke-width="0.8"/><path d="M1619 240.39999999999998 C1640.6 237.39999999999998 1658.6 243.39999999999998 1691 239.39999999999998" stroke="#bdbdbd" stroke-width="1.2" fill="none"/><path d="M1619 241.89999999999998 C1640.6 238.89999999999998 1658.6 244.89999999999998 1691 240.89999999999998" stroke="#8d8d8d" stroke-width="0.8" fill="none"/><path d="M1694.5 237.9 L1698.5 233.9" stroke="#e0e0e0" stroke-width="1"/><rect x="1600.7" y="260.8" width="100" height="28" fill="#4d4d4d"/><path d="M1601 289.1 L1700.7 289.1" stroke="#444" stroke-width="0.8"/><path d="M1694.5 266.8 L1698.5 262.8" stroke="#e0e0e0" stroke-width="1"/><rect x="1600.7" y="289.6" width="100" height="28" fill="#4d4d4d"/><path d="M1601 317.9 L1700.7 317.9" stroke="#444" stroke-width="0.8"/><path d="M1619 298.1 C1638.8 295.1 1655.3 301.1 1685 297.1" stroke="#f4f4f4" stroke-width="6" fill="none" stroke-linecap="round" filter="url(#blur1)"/><circle cx="1608.5" cy="294.1" r="2" fill="#ddd" filter="url(#blur1)"/><path d="M1694.5 295.6 L1698.5 291.6" stroke="#e0e0e0" stroke-width="1"/><rect x="1600.7" y="318.5" width="100" height="28" fill="#4d4d4d"/><path d="M1601 346.8 L1700.7 346.8" stroke="#444" stroke-width="0.8"/><path d="M1619 326.95000000000005 C1638.8 323.95000000000005 1655.3 329.95000000000005 1685 325.95000000000005" stroke="#f4f4f4" stroke-width="6" fill="none" stroke-linecap="round" filter="url(#blur1)"/><circle cx="1608.5" cy="323.0" r="2" fill="#ddd" filter="url(#blur1)"/><path d="M1694.5 324.5 L1698.5 320.5" stroke="#e0e0e0" stroke-width="1"/><rect x="1601" y="174.5" width="99.5" height="27.5" fill="none" stroke="#4a7aaa" stroke-width="1"/><rect x="1589" y="347" width="157" height="16.5" fill="#4a4a4a"/><path d="M1593 354 L1595 356 L1597 354" stroke="#9a9a9a" stroke-width="0.7" fill="none"/><path d="M1601 351.5 L1604.5 351.5 L1605.5 352.5 L1610 352.5 L1610 358.5 L1601 358.5 Z" fill="#e8e8e8"/><path d="M1601 354.0 L1610 354.0" stroke="#464646" stroke-width="0.5"/><rect x="1600" y="365" width="146" height="17" fill="#464646"/><path d="M1606 372.5 L1608 374.5 L1610 372.5" stroke="#9a9a9a" stroke-width="0.7" fill="none"/><path d="M1613.5 369.5 L1617.0 369.5 L1618.0 370.5 L1622.5 370.5 L1622.5 376.5 L1613.5 376.5 Z" fill="#e8e8e8"/><path d="M1613.5 372.0 L1622.5 372.0" stroke="#464646" stroke-width="0.5"/><rect x="1614" y="382.5" width="99" height="28" fill="#4d4d4d"/><path d="M1614 410.8 L1713 410.8" stroke="#444" stroke-width="0.8"/><path d="M1632 391.5 C1653.0 388.5 1670.5 394.5 1702 390.5" stroke="#f4f4f4" stroke-width="8" fill="none" stroke-linecap="round"/><rect x="1617.5" y="384.5" width="6" height="6" fill="#f0f0f0"/><path d="M1707 388.5 L1711 384.5" stroke="#e0e0e0" stroke-width="0.9"/><rect x="1708" y="392.0" width="3.5" height="3.5" fill="#000"/><rect x="1614" y="411.1" width="99" height="28" fill="#4d4d4d"/><path d="M1614 439.4 L1713 439.4" stroke="#444" stroke-width="0.8"/><path d="M1632 420.1 C1653.0 417.1 1670.5 423.1 1702 419.1" stroke="#f4f4f4" stroke-width="10" fill="none" stroke-linecap="round"/><rect x="1617.5" y="413.1" width="6" height="6" fill="#f0f0f0"/><path d="M1707 417.1 L1711 413.1" stroke="#e0e0e0" stroke-width="0.9"/><rect x="1708" y="420.6" width="3.5" height="3.5" fill="#000"/><rect x="1614" y="439.7" width="99" height="28" fill="#4d4d4d"/><path d="M1614 468.0 L1713 468.0" stroke="#444" stroke-width="0.8"/><path d="M1632 448.70000000000005 C1653.0 445.70000000000005 1670.5 451.70000000000005 1702 447.70000000000005" stroke="#f4f4f4" stroke-width="10" fill="none" stroke-linecap="round"/><rect x="1617.5" y="441.7" width="6" height="6" fill="#f0f0f0"/><path d="M1707 445.7 L1711 441.7" stroke="#e0e0e0" stroke-width="0.9"/><rect x="1708" y="449.2" width="3.5" height="3.5" fill="#000"/><rect x="1614" y="468.3" width="99" height="28" fill="#4d4d4d"/><path d="M1614 496.6 L1713 496.6" stroke="#444" stroke-width="0.8"/><path d="M1632 477.30000000000007 C1653.0 474.30000000000007 1670.5 480.30000000000007 1702 476.30000000000007" stroke="#f4f4f4" stroke-width="5" fill="none" stroke-linecap="round"/><path d="M1619 472.3 L1622.5 473.1" stroke="#ddd" stroke-width="1.3"/><path d="M1707 474.3 L1711 470.3" stroke="#e0e0e0" stroke-width="0.9"/><rect x="1708" y="477.8" width="3.5" height="3.5" fill="#000"/><rect x="1614" y="496.9" width="99" height="28" fill="#4d4d4d"/><path d="M1614 525.2 L1713 525.2" stroke="#444" stroke-width="0.8"/><path d="M1632 505.9000000000001 C1653.0 502.9000000000001 1670.5 508.9000000000001 1702 504.9000000000001" stroke="#f4f4f4" stroke-width="6" fill="none" stroke-linecap="round"/><path d="M1619 500.9 L1622.5 501.7" stroke="#ddd" stroke-width="1.3"/><path d="M1707 502.9 L1711 498.9" stroke="#e0e0e0" stroke-width="0.9"/><rect x="1708" y="506.4" width="3.5" height="3.5" fill="#000"/><rect x="1614" y="525.5" width="99" height="28" fill="#4d4d4d"/><path d="M1614 553.8 L1713 553.8" stroke="#444" stroke-width="0.8"/><path d="M1632 534.5000000000001 C1653.0 531.5000000000001 1670.5 537.5000000000001 1702 533.5000000000001" stroke="#f4f4f4" stroke-width="8" fill="none" stroke-linecap="round"/><path d="M1619 529.5 L1622.5 530.3" stroke="#ddd" stroke-width="1.3"/><path d="M1707 531.5 L1711 527.5" stroke="#e0e0e0" stroke-width="0.9"/><rect x="1708" y="535.0" width="3.5" height="3.5" fill="#000"/><rect x="1614" y="554.1" width="99" height="28" fill="#4d4d4d"/><path d="M1614 582.4 L1713 582.4" stroke="#444" stroke-width="0.8"/><path d="M1632 563.1000000000001 C1653.0 560.1000000000001 1670.5 566.1000000000001 1702 562.1000000000001" stroke="#f4f4f4" stroke-width="8" fill="none" stroke-linecap="round"/><ellipse cx="1621" cy="558.6" rx="1.8" ry="2.6" fill="#f0f0f0"/><path d="M1707 560.1 L1711 556.1" stroke="#e0e0e0" stroke-width="0.9"/><rect x="1708" y="563.6" width="3.5" height="3.5" fill="#000"/><rect x="1614" y="582.7" width="99" height="28" fill="#4d4d4d"/><path d="M1614 611.0 L1713 611.0" stroke="#444" stroke-width="0.8"/><path d="M1632 591.7000000000002 C1653.0 588.7000000000002 1670.5 594.7000000000002 1702 590.7000000000002" stroke="#f4f4f4" stroke-width="8" fill="none" stroke-linecap="round"/><ellipse cx="1621" cy="587.2" rx="1.8" ry="2.6" fill="#f0f0f0"/><path d="M1707 588.7 L1711 584.7" stroke="#e0e0e0" stroke-width="0.9"/><rect x="1708" y="592.2" width="3.5" height="3.5" fill="#000"/><rect x="1600" y="612.5" width="146" height="17" fill="#4a4a4a"/><path d="M1606 619 L1608 621 L1606 623" stroke="#9a9a9a" stroke-width="0.7" fill="none"/><path d="M1613.5 617.5 L1617.0 617.5 L1618.0 618.5 L1622.5 618.5 L1622.5 624.5 L1613.5 624.5 Z" fill="#e8e8e8"/><path d="M1613.5 620.0 L1622.5 620.0" stroke="#464646" stroke-width="0.5"/><rect x="1600" y="630.5" width="146" height="17" fill="#4a4a4a"/><path d="M1606 638 L1608 640 L1610 638" stroke="#9a9a9a" stroke-width="0.7" fill="none"/><path d="M1613.5 635.5 L1617.0 635.5 L1618.0 636.5 L1622.5 636.5 L1622.5 642.5 L1613.5 642.5 Z" fill="#e8e8e8"/><path d="M1613.5 638.0 L1622.5 638.0" stroke="#464646" stroke-width="0.5"/><rect x="1748" y="143" width="7.5" height="500" fill="#4a4a4a"/><rect x="1748" y="150" width="7.5" height="212" fill="#6a6a6a"/><path d="M1749.5 146 L1751.75 144 L1754 146" stroke="#777" stroke-width="0.6" fill="none"/><path d="M1581 651.5 L1700 651.5" stroke="#7a7a7a" stroke-width="0.8"/><path d="M1594.5 659 L1597.5 654.5 L1600.5 659 Z" fill="#f0f0f0"/><rect x="1575" y="662" width="182" height="6" fill="#484848"/>
  </svg>
  <span class="lbl" style="left:5px;top:34px;font-size:6.2px;color:#bdbdbd">Size:</span>
  <span class="lbl" style="left:82.5px;top:32.5px;font-size:6.4px;color:#e0e0e0">10 px</span>
  <span class="lbl" style="left:15px;top:60.5px;font-size:6px;color:#777;font-style:italic">Search Brushes</span>
  <span class="lbl" style="left:6.5px;top:85px;font-size:6px">10</span>
  <span class="lbl" style="left:64.5px;top:85px;font-size:6px">15</span>
  <span class="lbl" style="left:82px;top:85px;font-size:6px">5000</span>
  <span class="lbl" style="left:102.5px;top:85px;font-size:6px">2900</span>
  <span class="lbl" style="left:122.5px;top:85px;font-size:6px">2800</span>
<span class="lbl" style="left:28.0px;top:99.5px;font-size:6.3px;color:#dcdcdc">TimBrushes2022</span><span class="lbl" style="left:40.5px;top:118.0px;font-size:6.3px;color:#dcdcdc">Simple Process Brushes</span><span class="lbl" style="left:30.0px;top:137.2px;font-size:5.8px">10</span><span class="lbl" style="left:30.0px;top:146.4px;font-size:6.1px;color:#e2e2e2">Simple Pencil</span><span class="lbl" style="left:30.0px;top:166.0px;font-size:5.8px">45</span><span class="lbl" style="left:30.0px;top:175.2px;font-size:6.1px;color:#e2e2e2">Round Brush (Pencil Tool)</span><span class="lbl" style="left:30.0px;top:194.9px;font-size:5.8px">83</span><span class="lbl" style="left:30.0px;top:204.1px;font-size:6.1px;color:#e2e2e2">Rough Brush (Pencil Tool)</span><span class="lbl" style="left:30.0px;top:223.8px;font-size:5.8px">14...</span><span class="lbl" style="left:30.0px;top:232.9px;font-size:6.1px;color:#e2e2e2">Dust Particles</span><span class="lbl" style="left:30.0px;top:252.6px;font-size:5.8px">300</span><span class="lbl" style="left:30.0px;top:261.8px;font-size:6.1px;color:#e2e2e2">Soft Eraser (Eraser Tool)</span><span class="lbl" style="left:30.0px;top:281.5px;font-size:5.8px">70</span><span class="lbl" style="left:30.0px;top:290.7px;font-size:6.1px;color:#e2e2e2">Airbrush</span><span class="lbl" style="left:40.5px;top:308.0px;font-size:6.3px;color:#dcdcdc">Tim-brushes-Nov2019</span><span class="lbl" style="left:52.5px;top:326.5px;font-size:6.3px;color:#dcdcdc">Comics 2020</span><span class="lbl" style="left:42.5px;top:348.0px;font-size:5.8px">10</span><span class="lbl" style="left:42.5px;top:357.0px;font-size:6.1px;color:#e2e2e2">Square Sketch</span><span class="lbl" style="left:42.5px;top:376.6px;font-size:5.8px">100</span><span class="lbl" style="left:42.5px;top:385.6px;font-size:6.1px;color:#e2e2e2">Thumbnail</span><span class="lbl" style="left:42.5px;top:405.2px;font-size:5.8px">30</span><span class="lbl" style="left:42.5px;top:414.2px;font-size:6.1px;color:#e2e2e2">Rough Sketch</span><span class="lbl" style="left:42.5px;top:433.8px;font-size:5.8px">7</span><span class="lbl" style="left:42.5px;top:442.8px;font-size:6.1px;color:#e2e2e2">Pencil - Think Thin 7</span><span class="lbl" style="left:42.5px;top:462.4px;font-size:5.8px">10</span><span class="lbl" style="left:42.5px;top:471.4px;font-size:6.1px;color:#e2e2e2">Simple Pencil</span><span class="lbl" style="left:42.5px;top:491.0px;font-size:5.8px">15</span><span class="lbl" style="left:42.5px;top:500.0px;font-size:6.1px;color:#e2e2e2">Simple Pencil 15</span><span class="lbl" style="left:42.5px;top:519.6px;font-size:5.8px">15</span><span class="lbl" style="left:42.5px;top:528.6px;font-size:6.1px;color:#e2e2e2">Balloon Inker</span><span class="lbl" style="left:42.5px;top:548.2px;font-size:5.8px">15</span><span class="lbl" style="left:42.5px;top:557.2px;font-size:6.1px;color:#e2e2e2">Balloon Inker</span><span class="lbl" style="left:52.5px;top:574.0px;font-size:6.3px;color:#dcdcdc">Inking</span><span class="lbl" style="left:52.5px;top:592.0px;font-size:6.3px;color:#dcdcdc">Line and Color Tutorial</span></div>
<div id="layers" class="a panel" style="left:1757px;top:43px;width:163px;height:594px;border-left:1px solid #3a3a3a">
  <div class="a strip" style="left:0;top:0;width:163px;height:8px"></div>
  <div class="a tabbar" style="left:0;top:8px;width:163px;height:18px"></div>
  <div class="tab" style="left:0;top:8px;width:30px;height:18px;line-height:17px">Layers</div>
  <span class="lbl" style="left:36px;top:12.5px;font-size:6.3px;color:#aaa">Channels</span>
  <span class="lbl" style="left:74px;top:12.5px;font-size:6.3px;color:#aaa">Paths</span>
  <div class="a" style="left:0;top:577px;width:163px;height:12px;background:#4d4d4d;border-top:1px solid #474747"></div>
  <div class="a" style="left:0;top:589px;width:163px;height:5px;background:#444"></div>
  <svg class="a" style="left:-1px;top:0" width="164" height="594" viewBox="1756 43 164 594">
    <path d="M1913.5 46 L1914.5 47.5 L1913.5 49 M1915 46 L1916 47.5 L1915 49" stroke="#aaa" stroke-width="0.5" fill="none"/>
    <rect x="1761" y="75" width="52" height="11" fill="#464646"/>
    <circle cx="1768" cy="79.5" r="1.8" fill="none" stroke="#ddd" stroke-width="0.8"/><path d="M1769.3 80.8 L1771 82.5" stroke="#ddd" stroke-width="0.9"/>
    <path d="M1808.5 80 L1810 81.3 L1811.5 80" stroke="#999" stroke-width="0.6" fill="none"/>
    <g fill="none" stroke="#e0e0e0" stroke-width="0.8">
      <rect x="1822.5" y="76.5" width="7.5" height="6"/><path d="M1823.5 82 L1825 79.5 L1826.5 81 L1828 79 L1829.5 82" />
      <circle cx="1840.5" cy="79.5" r="3.2"/><path d="M1838 82 L1843 77" />
      <path d="M1853.5 77 L1858.5 77 M1856 77 L1856 82.5" stroke-width="1.2"/>
      <rect x="1868" y="76.5" width="6.5" height="6"/>
      <rect x="1883.5" y="79" width="6" height="4.5" fill="#e0e0e0"/><path d="M1884.5 79 C1884.5 76 1888.5 76 1888.5 78"/>
    </g>
    <circle cx="1899" cy="76.5" r="2" fill="#e6e6e6"/>
    <rect x="1761" y="92" width="79" height="12" fill="#464646"/>
    <path d="M1835.5 98.5 L1837 99.8 L1838.5 98.5" stroke="#999" stroke-width="0.6" fill="none"/>
    <rect x="1871" y="93" width="21" height="9" fill="#474747"/>
    <rect x="1893.5" y="93" width="8" height="9" fill="#474747"/>
    <path d="M1896 97 L1897.5 98.3 L1899 97" stroke="#999" stroke-width="0.6" fill="none"/>
    <rect x="1871" y="111" width="21" height="9" fill="#474747"/>
    <rect x="1893.5" y="111" width="8" height="9" fill="#474747"/>
    <path d="M1896 115 L1897.5 116.3 L1899 115" stroke="#999" stroke-width="0.6" fill="none"/>
    <g fill="#e0e0e0">
      <rect x="1782" y="111.5" width="7" height="7" fill="url(#chk)" stroke="#e0e0e0" stroke-width="0.5"/>
      <path d="M1797 118.5 L1803 110.5" stroke="#e0e0e0" stroke-width="1"/>
      <path d="M1813 110.5 L1813 118.5 M1809 114.5 L1817 114.5" stroke="#e0e0e0" stroke-width="0.9"/>
      <path d="M1823 112 L1830 112 L1830 118 L1823 118 Z M1823 112 L1830 118" fill="none" stroke="#e0e0e0" stroke-width="0.7"/>
      <rect x="1838.5" y="114.5" width="5.5" height="4.5"/><path d="M1839.5 114.5 C1839.5 111.5 1843 111.5 1843 114.5" fill="none" stroke="#e0e0e0" stroke-width="0.8"/>
    </g>
    <path d="M1758 124.5 L1920 124.5" stroke="#474747" stroke-width="0.8"/>
    <defs><pattern id="chk" width="4" height="4" patternUnits="userSpaceOnUse"><rect width="4" height="4" fill="#fff"/><rect width="2" height="2" fill="#d6d6d6"/><rect x="2" y="2" width="2" height="2" fill="#d6d6d6"/></pattern></defs><path d="M1758 138.5 L1920 138.5" stroke="#474747" stroke-width="0.8"/><path d="M1764.0 132.0 C1765.5 129.4 1769.5 129.4 1771.0 132.0 C1769.5 134.6 1765.5 134.6 1764.0 132.0 Z" fill="none" stroke="#e6e6e6" stroke-width="0.9"/><circle cx="1767.5" cy="132.0" r="1.3" fill="#e6e6e6"/><path d="M1781 130.0 L1783 132.0 L1781 134.0" stroke="#aaa" stroke-width="0.6" fill="none"/><path d="M1786.5 128.5 L1789.5 128.5 L1790.5 129.5 L1795.5 129.5 L1795.5 135.5 L1786.5 135.5 Z" fill="#e6e6e6"/><path d="M1758 165.5 L1920 165.5" stroke="#474747" stroke-width="0.8"/><path d="M1764.0 152.0 C1765.5 149.4 1769.5 149.4 1771.0 152.0 C1769.5 154.6 1765.5 154.6 1764.0 152.0 Z" fill="none" stroke="#e6e6e6" stroke-width="0.9"/><circle cx="1767.5" cy="152.0" r="1.3" fill="#e6e6e6"/><rect x="1780.5" y="143.0" width="19" height="18.5" fill="url(#chk)"/><rect x="1777" y="165.5" width="143" height="25.0" fill="#6a6a6a"/><path d="M1758 190.5 L1920 190.5" stroke="#474747" stroke-width="0.8"/><path d="M1764.0 178.0 C1765.5 175.4 1769.5 175.4 1771.0 178.0 C1769.5 180.6 1765.5 180.6 1764.0 178.0 Z" fill="none" stroke="#e6e6e6" stroke-width="0.9"/><circle cx="1767.5" cy="178.0" r="1.3" fill="#e6e6e6"/><rect x="1779.5" y="169.0" width="21" height="20.5" fill="none" stroke="#e0e0e0" stroke-width="0.7"/><rect x="1780.5" y="170.0" width="19" height="18.5" fill="url(#chk)"/><path d="M1758 216 L1920 216" stroke="#474747" stroke-width="0.8"/><path d="M1764.0 203.25 C1765.5 200.65 1769.5 200.65 1771.0 203.25 C1769.5 205.85 1765.5 205.85 1764.0 203.25 Z" fill="none" stroke="#e6e6e6" stroke-width="0.9"/><circle cx="1767.5" cy="203.25" r="1.3" fill="#e6e6e6"/><rect x="1780.5" y="195.0" width="19" height="18.5" fill="#fff"/><path d="M1758 242 L1920 242" stroke="#474747" stroke-width="0.8"/><path d="M1764.0 229.0 C1765.5 226.4 1769.5 226.4 1771.0 229.0 C1769.5 231.6 1765.5 231.6 1764.0 229.0 Z" fill="none" stroke="#e6e6e6" stroke-width="0.9"/><circle cx="1767.5" cy="229.0" r="1.3" fill="#e6e6e6"/><rect x="1780.5" y="220.5" width="19" height="18.5" fill="url(#chk)"/><path d="M1787 224.5 C1791 226.5 1786 229.5 1790 232.5 M1785 234.5 L1793 235.5 M1789 226.5 L1793 230.5" stroke="#444" stroke-width="0.7" fill="none"/><rect x="1758" y="242" width="19" height="16" fill="#b8323d"/><path d="M1758 258 L1920 258" stroke="#474747" stroke-width="0.8"/><path d="M1764.0 250.0 C1765.5 247.4 1769.5 247.4 1771.0 250.0 C1769.5 252.6 1765.5 252.6 1764.0 250.0 Z" fill="none" stroke="#e6e6e6" stroke-width="0.9"/><circle cx="1767.5" cy="250.0" r="1.3" fill="#e6e6e6"/><path d="M1781 248.0 L1783 250.0 L1781 252.0" stroke="#aaa" stroke-width="0.6" fill="none"/><path d="M1786.5 246.5 L1789.5 246.5 L1790.5 247.5 L1795.5 247.5 L1795.5 253.5 L1786.5 253.5 Z" fill="#e6e6e6"/><path d="M1758 284 L1920 284" stroke="#474747" stroke-width="0.8"/><path d="M1764.0 271.0 C1765.5 268.4 1769.5 268.4 1771.0 271.0 C1769.5 273.6 1765.5 273.6 1764.0 271.0 Z" fill="none" stroke="#e6e6e6" stroke-width="0.9"/><circle cx="1767.5" cy="271.0" r="1.3" fill="#e6e6e6"/><rect x="1780.5" y="262.5" width="19" height="18.5" fill="#b5aa92"/><path d="M1786 266.5 C1791 268.5 1787 271.5 1791 274.5 M1784 277.5 L1795 277.5 M1789 268.5 L1794 272.5" stroke="#5a5040" stroke-width="0.8" fill="none"/><path d="M1758 310 L1920 310" stroke="#474747" stroke-width="0.8"/><path d="M1764.0 297.0 C1765.5 294.4 1769.5 294.4 1771.0 297.0 C1769.5 299.6 1765.5 299.6 1764.0 297.0 Z" fill="none" stroke="#e6e6e6" stroke-width="0.9"/><circle cx="1767.5" cy="297.0" r="1.3" fill="#e6e6e6"/><rect x="1780.5" y="288.5" width="19" height="18.5" fill="#3c4a4c"/><rect x="1780.5" y="288.5" width="19" height="18.5" fill="none" stroke="#2e3a3c" stroke-width="0.6"/>
    <path d="M1757 620 L1920 620" stroke="#474747" stroke-width="0.8"/>
    <g fill="none" stroke="#cfcfcf" stroke-width="0.8">
      <circle cx="1806.5" cy="624" r="1.6" stroke="#8f8f8f"/><circle cx="1810" cy="624" r="1.6" stroke="#8f8f8f"/>
    </g>
    <text x="1823" y="627" font-family="Liberation Serif" font-style="italic" font-size="7.5" fill="#ddd">fx</text>
    <rect x="1839.5" y="621" width="8" height="6" fill="#e6e6e6"/><circle cx="1843.5" cy="624" r="1.5" fill="#333"/>
    <circle cx="1860.5" cy="624" r="3.2" fill="#e6e6e6"/><path d="M1858.5 626 L1862.5 622" stroke="#4d4d4d" stroke-width="0.8"/>
    <rect x="1873" y="621" width="8" height="6" fill="#e6e6e6"/>
    <rect x="1890" y="620.5" width="7" height="7" fill="none" stroke="#ddd" stroke-width="0.8"/><rect x="1892.5" y="623" width="2" height="2" fill="#ddd"/>
    <rect x="1907.5" y="621" width="6" height="7" fill="#bbb"/><rect x="1907" y="620" width="7" height="1" fill="#bbb"/>
  </svg>
  <span class="lbl" style="left:17px;top:34px;font-size:6.3px;color:#ddd">Kind</span>
  <span class="lbl" style="left:7.5px;top:51.5px;font-size:6.3px;color:#e6e6e6">Normal</span>
  <span class="lbl" style="left:88px;top:50.5px;font-size:6.2px;color:#bdbdbd">Opacity:</span>
  <span class="lbl" style="left:116px;top:50.5px;font-size:6.2px;color:#e6e6e6">100%</span>
  <span class="lbl" style="left:5px;top:68px;font-size:6.2px;color:#bdbdbd">Lock:</span>
  <span class="lbl" style="left:101px;top:68px;font-size:6.2px;color:#bdbdbd">Fill:</span>
  <span class="lbl" style="left:116px;top:68px;font-size:6.2px;color:#e6e6e6">100%</span>
<span class="lbl" style="left:46.5px;top:84.7px;font-size:6.2px;color:#e6e6e6">Sig</span><span class="lbl" style="left:48.5px;top:104.7px;font-size:6.2px;color:#e6e6e6">Layer 51</span><span class="lbl" style="left:48.5px;top:130.7px;font-size:6.2px;color:#e6e6e6">Layer 52</span><span class="lbl" style="left:48.5px;top:155.9px;font-size:6.2px;color:#e6e6e6">Layer 50</span><span class="lbl" style="left:48.5px;top:181.7px;font-size:6.2px;color:#e6e6e6">Layer 49</span><span class="lbl" style="left:46.5px;top:202.7px;font-size:6.2px;color:#e6e6e6">Group 1</span><span class="lbl" style="left:48.5px;top:223.7px;font-size:6.2px;color:#e6e6e6">Layer 48</span><span class="lbl" style="left:48.5px;top:249.7px;font-size:6.2px;color:#e6e6e6">Layer 0</span>
</div>
<!-- WEBCAM -->
<svg id="cam" class="a" style="left:1500px;top:645px" width="410" height="410" viewBox="0 0 1080 1080">
  <defs>
    <clipPath id="cc"><circle cx="540" cy="540" r="529"/></clipPath>
    <filter id="b2" x="-30%" y="-30%" width="160%" height="160%"><feGaussianBlur stdDeviation="2"/></filter>
    <filter id="b4" x="-30%" y="-30%" width="160%" height="160%"><feGaussianBlur stdDeviation="4"/></filter>
    <filter id="b8" x="-50%" y="-50%" width="200%" height="200%"><feGaussianBlur stdDeviation="8"/></filter>
    <filter id="b16" x="-50%" y="-50%" width="200%" height="200%"><feGaussianBlur stdDeviation="16"/></filter>
    <radialGradient id="potg" cx="0.4" cy="0.3" r="0.8"><stop offset="0" stop-color="#c8b8b0"/><stop offset="1" stop-color="#8a7a72"/></radialGradient>
  </defs>
  <circle cx="540" cy="552" r="534" fill="#1c1c1c" filter="url(#b8)"/>
  <g clip-path="url(#cc)">
    <rect width="1080" height="1080" fill="#090504"/>
    <rect x="322" y="60" width="376" height="130" fill="none" stroke="#1c1410" stroke-width="9" filter="url(#b2)"/>
    <rect x="790" y="85" width="230" height="160" fill="#18120d" filter="url(#b8)"/>
    <ellipse cx="858" cy="150" rx="40" ry="42" fill="#a89888" filter="url(#b4)"/>
    <rect x="805" y="195" width="190" height="38" fill="#251c15" filter="url(#b4)"/>
    <ellipse cx="890" cy="386" rx="56" ry="24" fill="#2e251d" filter="url(#b4)"/>
    <rect x="60" y="425" width="250" height="16" fill="#120c09" filter="url(#b4)"/>
    <!-- plant -->
    <ellipse cx="98" cy="525" rx="60" ry="45" fill="#1e2012" filter="url(#b4)"/>
    <path d="M55 540 C60 500 80 480 95 505 M105 510 C115 478 135 470 150 500 M80 550 C65 525 50 515 40 520 M120 475 C125 460 135 455 140 465" stroke="#3a3e22" stroke-width="9" fill="none" filter="url(#b2)"/>
    <path d="M22 562 C60 550 130 550 166 558 L160 625 C150 645 45 648 30 630 Z" fill="url(#potg)" filter="url(#b2)"/>
    <ellipse cx="95" cy="660" rx="90" ry="20" fill="#150e0b" filter="url(#b4)"/>
    <!-- shirt -->
    <path d="M70 840 C150 778 240 748 330 732 L460 905 C530 915 600 880 670 715 C760 735 860 800 895 960 L920 1100 L40 1100 Z" fill="#574934"/>
    <path d="M620 760 C700 780 800 820 860 900 L880 1000 C820 920 720 860 640 850 Z" fill="#5c4d36" filter="url(#b8)"/>
    <path d="M60 1000 C200 980 400 1000 600 1080 L40 1080 Z" fill="#3e3222" filter="url(#b16)"/>
    <path d="M300 940 C330 980 350 1030 360 1080" stroke="#3a3020" stroke-width="14" fill="none" filter="url(#b8)"/>
    <!-- collar -->
    <path d="M185 748 C250 812 330 887 465 920 C540 926 600 892 650 837 L666 862 C612 932 536 957 455 950 C320 927 228 862 163 772 Z" fill="#3b3122" filter="url(#b2)"/>
    <!-- neck -->
    <path d="M188 750 C250 705 300 640 325 590 L470 907 C350 892 258 832 188 750 Z" fill="#8c4e40"/>
    <ellipse cx="300" cy="780" rx="70" ry="50" fill="#a05c4c" filter="url(#b16)"/>
    <!-- face -->
    <path d="M325 478 C370 430 480 415 600 425 C700 437 752 482 744 560 C734 650 706 720 666 770 C626 830 566 900 470 904 C400 894 340 824 320 744 C302 664 306 548 325 478 Z" fill="#94554a"/>
    <ellipse cx="620" cy="480" rx="85" ry="35" fill="#a05e50" filter="url(#b8)"/>
    <ellipse cx="440" cy="660" rx="85" ry="75" fill="#a86458" filter="url(#b16)"/>
    <path d="M565 632 C585 685 565 730 555 762 C575 797 640 797 665 767 C675 727 655 677 640 642 Z" fill="#b27062" filter="url(#b4)"/>
    <path d="M700 540 C720 600 710 680 680 740" stroke="#6e3a30" stroke-width="20" fill="none" filter="url(#b8)"/>
    <path d="M318 600 C330 700 380 822 462 904 C527 914 587 882 627 832 C587 802 522 797 462 767 C402 707 362 642 330 588 Z" fill="#7e665c" opacity="0.6" filter="url(#b4)"/>
    <path d="M470 587 C515 582 560 602 597 620" stroke="#4e2a22" stroke-width="12" fill="none" filter="url(#b2)"/>
    <path d="M485 617 C515 634 550 647 587 638" stroke="#3a1c16" stroke-width="8" fill="none" filter="url(#b2)"/>
    <path d="M640 657 C660 670 685 670 706 657" stroke="#3a1c16" stroke-width="7" fill="none" filter="url(#b2)"/>
    <path d="M640 622 C670 632 700 632 722 617" stroke="#5e3228" stroke-width="8" fill="none" filter="url(#b2)"/>
    <path d="M475 786 C522 778 578 784 608 794 C580 816 524 822 477 810 Z" fill="#74423a" filter="url(#b4)"/>
    <!-- ear -->
    <path d="M300 450 C282 490 286 560 312 590 C332 600 356 582 362 542 C364 500 340 450 300 450 Z" fill="#9a5648"/>
    <path d="M318 490 C312 520 318 550 332 565" stroke="#6a3a30" stroke-width="8" fill="none" filter="url(#b2)"/>
    <!-- hair -->
    <path d="M297 396 C302 370 310 350 320 336 C340 290 360 250 376 234 C400 210 415 195 432 188 C460 175 490 163 515 160 C550 157 580 160 608 165 C630 172 655 185 677 197 C700 210 725 225 747 239 C765 255 780 275 793 295 C805 315 815 333 821 350 C828 370 833 390 835 406 C836 420 834 435 830 443 C815 452 805 454 793 452 C775 450 760 447 747 443 C735 438 730 436 724 434 C700 428 680 422 654 420 C630 420 610 425 589 434 C578 450 570 480 561 498 C552 508 545 512 534 512 C520 505 508 495 497 489 C480 480 465 474 446 471 C420 470 398 478 376 489 C368 497 360 506 353 512 C340 490 330 470 320 452 C305 430 297 415 297 396 Z" fill="#241610"/>
    <g stroke="#5e3e2a" stroke-width="6" fill="none" filter="url(#b2)">
      <path d="M340 330 C380 270 440 220 520 205"/>
      <path d="M430 260 C490 215 570 205 640 225"/>
      <path d="M520 300 C580 250 660 250 730 290"/>
      <path d="M400 380 C450 330 520 310 580 330"/>
      <path d="M600 340 C660 310 740 330 800 380"/>
      <path d="M330 420 C360 380 400 360 450 360"/>
      <path d="M680 380 C730 360 780 380 820 420"/>
      <path d="M470 410 C520 380 580 380 620 400"/>
      <path d="M700 250 C740 270 780 300 800 340"/>
    </g>
    <g stroke="#120a06" stroke-width="10" fill="none" filter="url(#b2)">
      <path d="M560 290 C600 270 640 290 650 330"/>
      <path d="M420 330 C460 310 500 320 520 350"/>
      <path d="M700 430 C740 410 780 420 810 440"/>
    </g>
    <!-- mic -->
    <path d="M330 600 C360 665 392 722 425 752" stroke="#0d0b0a" stroke-width="5" fill="none"/>
    <circle cx="428" cy="755" r="19" fill="#0a0909"/>
  </g>
</svg>
</body></html>
